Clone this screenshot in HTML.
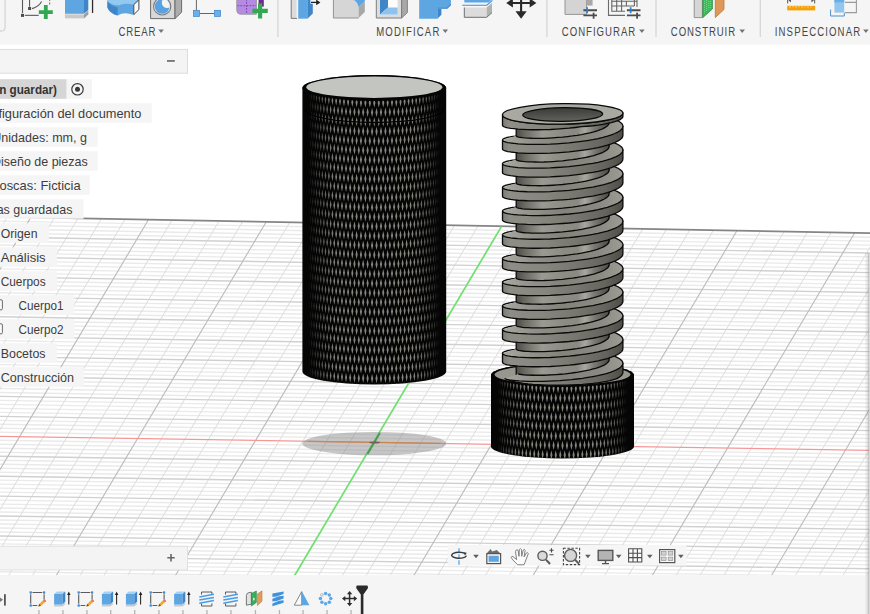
<!DOCTYPE html>
<html><head><meta charset="utf-8"><title>Fusion</title>
<style>
html,body{margin:0;padding:0;background:#fff;}
body{width:870px;height:614px;overflow:hidden;font-family:"Liberation Sans",sans-serif;}
#app{position:relative;width:870px;height:614px;overflow:hidden;background:#fff;}
#scene{position:absolute;left:0;top:0;}
#ui{position:absolute;left:0;top:0;}
#ui text{font-family:"Liberation Sans",sans-serif;}

</style></head>
<body>
<div id="app">
<svg id="scene" width="870" height="614" viewBox="0 0 870 614">
<defs><path id="kcol" d="M0 -4.7 l1.1 4.7 l-1.1 4.7 l-1.1 -4.7 zM0 14.3 l1.1 4.7 l-1.1 4.7 l-1.1 -4.7 zM0 33.4 l1.1 4.7 l-1.1 4.7 l-1.1 -4.7 zM0 52.4 l1.1 4.7 l-1.1 4.7 l-1.1 -4.7 zM0 71.3 l1.1 4.7 l-1.1 4.7 l-1.1 -4.7 zM0 90.3 l1.1 4.7 l-1.1 4.7 l-1.1 -4.7 zM0 109.3 l1.1 4.7 l-1.1 4.7 l-1.1 -4.7 zM0 128.3 l1.1 4.7 l-1.1 4.7 l-1.1 -4.7 zM0 147.3 l1.1 4.7 l-1.1 4.7 l-1.1 -4.7 zM0 166.3 l1.1 4.7 l-1.1 4.7 l-1.1 -4.7 zM0 185.3 l1.1 4.7 l-1.1 4.7 l-1.1 -4.7 zM0 204.3 l1.1 4.7 l-1.1 4.7 l-1.1 -4.7 zM0 223.3 l1.1 4.7 l-1.1 4.7 l-1.1 -4.7 zM0 242.3 l1.1 4.7 l-1.1 4.7 l-1.1 -4.7 zM0 261.4 l1.1 4.7 l-1.1 4.7 l-1.1 -4.7 zM0 280.4 l1.1 4.7 l-1.1 4.7 l-1.1 -4.7 zM0 299.4 l1.1 4.7 l-1.1 4.7 l-1.1 -4.7 zM0 318.4 l1.1 4.7 l-1.1 4.7 l-1.1 -4.7 z" fill="#86867e"/><linearGradient id="holeg" x1="0" y1="0" x2="0" y2="1"><stop offset="0" stop-color="#3a3a38"/><stop offset="1" stop-color="#62625e"/></linearGradient><linearGradient id="bandg" gradientUnits="userSpaceOnUse" x1="502.5" y1="0" x2="622.9" y2="0"><stop offset="0" stop-color="#7c7c74"/><stop offset="0.06" stop-color="#8e8e86"/><stop offset="0.35" stop-color="#86867e"/><stop offset="0.62" stop-color="#76766e"/><stop offset="0.85" stop-color="#65655e"/><stop offset="1" stop-color="#4e4e48"/></linearGradient><linearGradient id="coreg" gradientUnits="userSpaceOnUse" x1="516.2" y1="0" x2="609.2" y2="0"><stop offset="0" stop-color="#4c4c47"/><stop offset="0.10" stop-color="#6c6c65"/><stop offset="0.28" stop-color="#9a9a92"/><stop offset="0.5" stop-color="#8c8c84"/><stop offset="0.66" stop-color="#8a8a82"/><stop offset="0.74" stop-color="#a8a8a0"/><stop offset="0.84" stop-color="#7a7a73"/><stop offset="1" stop-color="#4a4a45"/></linearGradient><linearGradient id="topg" gradientUnits="userSpaceOnUse" x1="502.5" y1="0" x2="622.9" y2="0"><stop offset="0" stop-color="#aaaaa2"/><stop offset="0.22" stop-color="#93938b"/><stop offset="0.5" stop-color="#83837b"/><stop offset="0.8" stop-color="#8a8a82"/><stop offset="1" stop-color="#9c9c94"/></linearGradient></defs>
<g id="grid">
<path d="M0 221.1 L870 237.2M0 225 L870 241.1M0 229 L870 245.1M0 233 L870 249M0 241 L870 256.9M0 245 L870 260.9M0 249 L870 264.8M0 252.9 L870 268.8M0 260.9 L870 276.7M0 264.9 L870 280.6M0 268.9 L870 284.6M0 272.9 L870 288.5M0 280.8 L870 296.4M0 284.8 L870 300.4M0 288.8 L870 304.3M0 292.8 L870 308.3M0 300.8 L870 316.2M0 304.8 L870 320.1M0 308.7 L870 324.1M0 312.7 L870 328M0 320.7 L870 335.9M0 324.7 L870 339.8M0 328.7 L870 343.8M0 332.7 L870 347.7M0 340.6 L870 355.6M0 344.6 L870 359.6M0 348.6 L870 363.5M0 352.6 L870 367.5M0 360.6 L870 375.4M0 364.6 L870 379.3M0 368.5 L870 383.3M0 372.5 L870 387.2M0 380.5 L870 395.1M0 384.5 L870 399.1M0 388.5 L870 403M0 392.5 L870 407M0 400.4 L870 414.9M0 404.4 L870 418.8M0 408.4 L870 422.8M0 412.4 L870 426.7M0 420.4 L870 434.6M0 424.3 L870 438.5M0 428.3 L870 442.5M0 432.3 L870 446.4M0 440.3 L870 454.3M0 444.3 L870 458.3M0 448.3 L870 462.2M0 452.2 L870 466.2M0 460.2 L870 474.1M0 464.2 L870 478M0 468.2 L870 482M0 472.2 L870 485.9M0 480.1 L870 493.8M0 484.1 L870 497.8M0 488.1 L870 501.7M0 492.1 L870 505.7M0 500.1 L870 513.6M0 504.1 L870 517.5M0 508 L870 521.5M0 512 L870 525.4M0 520 L870 533.3M0 524 L870 537.3M0 528 L870 541.2M0 532 L870 545.1M0 539.9 L870 553M0 543.9 L870 557M0 547.9 L870 560.9M0 551.9 L870 564.9M0 559.9 L870 572.8M0 563.9 L870 576.7M0 567.8 L870 580.7M0 571.8 L870 584.6M0 579.8 L870 592.5M0 583.8 L870 596.5M0 587.8 L870 600.4" stroke="#eaeaea" stroke-width="1.4" fill="none"/>
<path d="M7.2 217.2 L-209.8 582M54.2 218.1 L-162.2 582M77.8 218.5 L-138.3 582M101.3 219 L-114.5 582M124.9 219.4 L-90.6 582M171.9 220.3 L-43 582M195.5 220.7 L-19.1 582M219 221.1 L4.7 582M242.6 221.6 L28.6 582M289.6 222.5 L76.3 582M313.2 222.9 L100.1 582M336.7 223.3 L123.9 582M360.3 223.8 L147.8 582M407.3 224.6 L195.5 582M430.9 225.1 L219.3 582M454.4 225.5 L243.1 582M478 226 L267 582M525 226.8 L314.7 582M548.6 227.3 L338.5 582M572.1 227.7 L362.3 582M595.7 228.1 L386.2 582M642.7 229 L433.9 582M666.3 229.5 L457.7 582M689.8 229.9 L481.5 582M713.4 230.3 L505.4 582M760.4 231.2 L553.1 582M784 231.7 L576.9 582M807.5 232.1 L600.8 582M831.1 232.5 L624.6 582M878.1 233.4 L672.3 582M901.7 233.8 L696.1 582M925.2 234.3 L720 582M948.8 234.7 L743.8 582M995.8 235.6 L791.5 582M1019.4 236 L815.3 582M1042.9 236.5 L839.2 582M1066.5 236.9 L863 582" stroke="#dcdcdc" stroke-width="1" fill="none"/>
<path d="M0 237 L870 253M0 256.9 L870 272.7M0 276.9 L870 292.5M0 296.8 L870 312.2M0 316.7 L870 332M0 336.6 L870 351.7M0 356.6 L870 371.4M0 376.5 L870 391.2M0 396.4 L870 410.9M0 416.4 L870 430.7M0 456.2 L870 470.1M0 476.2 L870 489.9M0 496.1 L870 509.6M0 516 L870 529.4M0 536 L870 549.1M0 555.9 L870 568.8M0 575.8 L870 588.6" stroke="#d0d0d0" stroke-width="1.35" fill="none"/>
<path d="M30.7 217.6 L-186 582M148.4 219.8 L-66.8 582M266.1 222 L52.4 582M383.8 224.2 L171.6 582M619.2 228.6 L410 582M736.9 230.8 L529.2 582M854.6 233 L648.4 582M972.3 235.2 L767.6 582" stroke="#bbbbbb" stroke-width="1.1" fill="none"/>
<path d="M0 216.9 L870 233.1" stroke="#858585" stroke-width="1.6" fill="none"/>
<path d="M0 436.3 L870 450.4" stroke="#f59797" stroke-width="1.3" fill="none"/>
<path d="M501.5 226.4 L290.8 582" stroke="#6fe06f" stroke-width="1.7" fill="none"/>
</g>
<ellipse cx="374.3" cy="443.6" rx="71.9" ry="11.7" fill="#868686" fill-opacity="0.47"/>
<path d="M308 441.3 L441 443.4" stroke="#cc8650" stroke-width="1.2" fill="none"/>
<path d="M379.9 433 L367.5 454" stroke="#3f9e4a" stroke-width="1.7" fill="none"/>
<ellipse cx="374.6" cy="442.5" rx="5.4" ry="1.1" fill="#7c5c56"/>
<g id="cyl1">
<clipPath id="clipc1"><path d="M302.4 88 L302.4 371.6 A71.9 12.9 0 0 0 446.2 371.6 L446.2 88 A71.9 12.9 0 0 0 302.4 88 Z"/></clipPath>
<path d="M302.4 88 L302.4 371.6 A71.9 12.9 0 0 0 446.2 371.6 L446.2 88 A71.9 12.9 0 0 0 302.4 88 Z" fill="#050505"/>
<g clip-path="url(#clipc1)">
<use href="#kcol" transform="translate(309.61 76.6) scale(0.44 1)" opacity="0.08"/>
<use href="#kcol" transform="translate(310.62 86.5) scale(0.46 1)" opacity="0.14"/>
<use href="#kcol" transform="translate(311.69 77.3) scale(0.49 1)" opacity="0.2"/>
<use href="#kcol" transform="translate(312.82 87.2) scale(0.52 1)" opacity="0.26"/>
<use href="#kcol" transform="translate(314 78) scale(0.54 1)" opacity="0.32"/>
<use href="#kcol" transform="translate(315.25 87.9) scale(0.57 1)" opacity="0.38"/>
<use href="#kcol" transform="translate(316.55 78.7) scale(0.6 1)" opacity="0.44"/>
<use href="#kcol" transform="translate(317.91 88.5) scale(0.62 1)" opacity="0.49"/>
<use href="#kcol" transform="translate(319.33 79.3) scale(0.64 1)" opacity="0.54"/>
<use href="#kcol" transform="translate(320.79 89.1) scale(0.67 1)" opacity="0.6"/>
<use href="#kcol" transform="translate(322.31 79.9) scale(0.69 1)" opacity="0.65"/>
<use href="#kcol" transform="translate(323.88 89.7) scale(0.71 1)" opacity="0.7"/>
<use href="#kcol" transform="translate(325.5 80.5) scale(0.73 1)" opacity="0.74"/>
<use href="#kcol" transform="translate(327.16 90.2) scale(0.76 1)" opacity="0.79"/>
<use href="#kcol" transform="translate(328.87 81) scale(0.78 1)" opacity="0.83"/>
<use href="#kcol" transform="translate(330.63 90.7) scale(0.79 1)" opacity="0.88"/>
<use href="#kcol" transform="translate(332.42 81.5) scale(0.81 1)" opacity="0.92"/>
<use href="#kcol" transform="translate(334.26 91.2) scale(0.83 1)" opacity="0.96"/>
<use href="#kcol" transform="translate(336.14 81.9) scale(0.85 1)" opacity="0.99"/>
<use href="#kcol" transform="translate(338.05 91.6) scale(0.86 1)"/>
<use href="#kcol" transform="translate(340 82.3) scale(0.88 1)"/>
<use href="#kcol" transform="translate(341.98 92) scale(0.89 1)"/>
<use href="#kcol" transform="translate(343.99 82.7) scale(0.91 1)"/>
<use href="#kcol" transform="translate(346.03 92.4) scale(0.92 1)"/>
<use href="#kcol" transform="translate(348.1 83) scale(0.93 1)"/>
<use href="#kcol" transform="translate(350.19 92.7) scale(0.94 1)"/>
<use href="#kcol" transform="translate(352.31 83.3) scale(0.95 1)"/>
<use href="#kcol" transform="translate(354.45 92.9) scale(0.96 1)"/>
<use href="#kcol" transform="translate(356.6 83.5) scale(0.97 1)"/>
<use href="#kcol" transform="translate(358.78 93.1) scale(0.98 1)"/>
<use href="#kcol" transform="translate(360.97 83.7) scale(0.98 1)"/>
<use href="#kcol" transform="translate(363.17 93.2) scale(0.99 1)"/>
<use href="#kcol" transform="translate(365.38 83.8) scale(0.99 1)"/>
<use href="#kcol" transform="translate(367.6 93.3) scale(1 1)"/>
<use href="#kcol" transform="translate(369.83 83.9) scale(1 1)"/>
<use href="#kcol" transform="translate(372.07 93.4) scale(1 1)"/>
<use href="#kcol" transform="translate(374.3 83.9) scale(1 1)"/>
<use href="#kcol" transform="translate(376.53 93.4) scale(1 1)"/>
<use href="#kcol" transform="translate(378.77 83.9) scale(1 1)"/>
<use href="#kcol" transform="translate(381 93.3) scale(1 1)"/>
<use href="#kcol" transform="translate(383.22 83.8) scale(0.99 1)"/>
<use href="#kcol" transform="translate(385.43 93.2) scale(0.99 1)"/>
<use href="#kcol" transform="translate(387.63 83.7) scale(0.98 1)"/>
<use href="#kcol" transform="translate(389.82 93.1) scale(0.98 1)"/>
<use href="#kcol" transform="translate(392 83.5) scale(0.97 1)"/>
<use href="#kcol" transform="translate(394.15 92.9) scale(0.96 1)"/>
<use href="#kcol" transform="translate(396.29 83.3) scale(0.95 1)"/>
<use href="#kcol" transform="translate(398.41 92.7) scale(0.94 1)"/>
<use href="#kcol" transform="translate(400.5 83) scale(0.93 1)"/>
<use href="#kcol" transform="translate(402.57 92.4) scale(0.92 1)"/>
<use href="#kcol" transform="translate(404.61 82.7) scale(0.91 1)"/>
<use href="#kcol" transform="translate(406.62 92) scale(0.89 1)"/>
<use href="#kcol" transform="translate(408.6 82.3) scale(0.88 1)"/>
<use href="#kcol" transform="translate(410.55 91.6) scale(0.86 1)"/>
<use href="#kcol" transform="translate(412.46 81.9) scale(0.85 1)" opacity="0.99"/>
<use href="#kcol" transform="translate(414.34 91.2) scale(0.83 1)" opacity="0.96"/>
<use href="#kcol" transform="translate(416.18 81.5) scale(0.81 1)" opacity="0.92"/>
<use href="#kcol" transform="translate(417.97 90.7) scale(0.79 1)" opacity="0.88"/>
<use href="#kcol" transform="translate(419.73 81) scale(0.78 1)" opacity="0.83"/>
<use href="#kcol" transform="translate(421.44 90.2) scale(0.76 1)" opacity="0.79"/>
<use href="#kcol" transform="translate(423.1 80.5) scale(0.73 1)" opacity="0.74"/>
<use href="#kcol" transform="translate(424.72 89.7) scale(0.71 1)" opacity="0.7"/>
<use href="#kcol" transform="translate(426.29 79.9) scale(0.69 1)" opacity="0.65"/>
<use href="#kcol" transform="translate(427.81 89.1) scale(0.67 1)" opacity="0.6"/>
<use href="#kcol" transform="translate(429.27 79.3) scale(0.64 1)" opacity="0.54"/>
<use href="#kcol" transform="translate(430.69 88.5) scale(0.62 1)" opacity="0.49"/>
<use href="#kcol" transform="translate(432.05 78.7) scale(0.6 1)" opacity="0.44"/>
<use href="#kcol" transform="translate(433.35 87.9) scale(0.57 1)" opacity="0.38"/>
<use href="#kcol" transform="translate(434.6 78) scale(0.54 1)" opacity="0.32"/>
<use href="#kcol" transform="translate(435.78 87.2) scale(0.52 1)" opacity="0.26"/>
<use href="#kcol" transform="translate(436.91 77.3) scale(0.49 1)" opacity="0.2"/>
<use href="#kcol" transform="translate(437.98 86.5) scale(0.46 1)" opacity="0.14"/>
<use href="#kcol" transform="translate(438.99 76.6) scale(0.44 1)" opacity="0.08"/>
</g>
<path d="M305.4 109.6 A68.9 12.9 0 0 0 443.2 109.6" stroke="#000" stroke-width="1.3" fill="none"/>
<ellipse cx="374.3" cy="88" rx="71.9" ry="12.9" fill="#050505"/>
<ellipse cx="374.3" cy="87.2" rx="68" ry="10.7" fill="#c3c5c1"/>
</g>
<g id="screw">
<clipPath id="clipc2"><path d="M491 375 L491 446.5 A71.5 12 0 0 0 634 446.5 L634 375 A71.5 12 0 0 0 491 375 Z"/></clipPath>
<path d="M491 375 L491 446.5 A71.5 12 0 0 0 634 446.5 L634 375 A71.5 12 0 0 0 491 375 Z" fill="#050505"/>
<g clip-path="url(#clipc2)">
<use href="#kcol" transform="translate(497.98 362.7) scale(0.43 1)" opacity="0.07"/>
<use href="#kcol" transform="translate(498.97 372.5) scale(0.46 1)" opacity="0.13"/>
<use href="#kcol" transform="translate(500.03 363.3) scale(0.49 1)" opacity="0.19"/>
<use href="#kcol" transform="translate(501.15 373.2) scale(0.51 1)" opacity="0.25"/>
<use href="#kcol" transform="translate(502.32 364) scale(0.54 1)" opacity="0.31"/>
<use href="#kcol" transform="translate(503.56 373.8) scale(0.57 1)" opacity="0.37"/>
<use href="#kcol" transform="translate(504.85 364.6) scale(0.59 1)" opacity="0.43"/>
<use href="#kcol" transform="translate(506.2 374.4) scale(0.62 1)" opacity="0.48"/>
<use href="#kcol" transform="translate(507.61 365.2) scale(0.64 1)" opacity="0.54"/>
<use href="#kcol" transform="translate(509.07 375) scale(0.66 1)" opacity="0.59"/>
<use href="#kcol" transform="translate(510.58 365.8) scale(0.69 1)" opacity="0.64"/>
<use href="#kcol" transform="translate(512.14 375.5) scale(0.71 1)" opacity="0.69"/>
<use href="#kcol" transform="translate(513.75 366.3) scale(0.73 1)" opacity="0.74"/>
<use href="#kcol" transform="translate(515.41 376) scale(0.75 1)" opacity="0.78"/>
<use href="#kcol" transform="translate(517.11 366.8) scale(0.77 1)" opacity="0.83"/>
<use href="#kcol" transform="translate(518.86 376.5) scale(0.79 1)" opacity="0.87"/>
<use href="#kcol" transform="translate(520.66 367.2) scale(0.81 1)" opacity="0.91"/>
<use href="#kcol" transform="translate(522.49 376.9) scale(0.83 1)" opacity="0.95"/>
<use href="#kcol" transform="translate(524.36 367.7) scale(0.85 1)" opacity="0.99"/>
<use href="#kcol" transform="translate(526.27 377.3) scale(0.86 1)"/>
<use href="#kcol" transform="translate(528.21 368) scale(0.88 1)"/>
<use href="#kcol" transform="translate(530.19 377.7) scale(0.89 1)"/>
<use href="#kcol" transform="translate(532.2 368.4) scale(0.91 1)"/>
<use href="#kcol" transform="translate(534.24 378) scale(0.92 1)"/>
<use href="#kcol" transform="translate(536.3 368.7) scale(0.93 1)"/>
<use href="#kcol" transform="translate(538.4 378.3) scale(0.94 1)"/>
<use href="#kcol" transform="translate(540.51 368.9) scale(0.95 1)"/>
<use href="#kcol" transform="translate(542.65 378.5) scale(0.96 1)"/>
<use href="#kcol" transform="translate(544.81 369.1) scale(0.97 1)"/>
<use href="#kcol" transform="translate(546.98 378.7) scale(0.98 1)"/>
<use href="#kcol" transform="translate(549.17 369.3) scale(0.98 1)"/>
<use href="#kcol" transform="translate(551.37 378.9) scale(0.99 1)"/>
<use href="#kcol" transform="translate(553.58 369.4) scale(0.99 1)"/>
<use href="#kcol" transform="translate(555.8 378.9) scale(1 1)"/>
<use href="#kcol" transform="translate(558.03 369.5) scale(1 1)"/>
<use href="#kcol" transform="translate(560.27 379) scale(1 1)"/>
<use href="#kcol" transform="translate(562.5 369.5) scale(1 1)"/>
<use href="#kcol" transform="translate(564.73 379) scale(1 1)"/>
<use href="#kcol" transform="translate(566.97 369.5) scale(1 1)"/>
<use href="#kcol" transform="translate(569.2 378.9) scale(1 1)"/>
<use href="#kcol" transform="translate(571.42 369.4) scale(0.99 1)"/>
<use href="#kcol" transform="translate(573.63 378.9) scale(0.99 1)"/>
<use href="#kcol" transform="translate(575.83 369.3) scale(0.98 1)"/>
<use href="#kcol" transform="translate(578.02 378.7) scale(0.98 1)"/>
<use href="#kcol" transform="translate(580.19 369.1) scale(0.97 1)"/>
<use href="#kcol" transform="translate(582.35 378.5) scale(0.96 1)"/>
<use href="#kcol" transform="translate(584.49 368.9) scale(0.95 1)"/>
<use href="#kcol" transform="translate(586.6 378.3) scale(0.94 1)"/>
<use href="#kcol" transform="translate(588.7 368.7) scale(0.93 1)"/>
<use href="#kcol" transform="translate(590.76 378) scale(0.92 1)"/>
<use href="#kcol" transform="translate(592.8 368.4) scale(0.91 1)"/>
<use href="#kcol" transform="translate(594.81 377.7) scale(0.89 1)"/>
<use href="#kcol" transform="translate(596.79 368) scale(0.88 1)"/>
<use href="#kcol" transform="translate(598.73 377.3) scale(0.86 1)"/>
<use href="#kcol" transform="translate(600.64 367.7) scale(0.85 1)" opacity="0.99"/>
<use href="#kcol" transform="translate(602.51 376.9) scale(0.83 1)" opacity="0.95"/>
<use href="#kcol" transform="translate(604.34 367.2) scale(0.81 1)" opacity="0.91"/>
<use href="#kcol" transform="translate(606.14 376.5) scale(0.79 1)" opacity="0.87"/>
<use href="#kcol" transform="translate(607.89 366.8) scale(0.77 1)" opacity="0.83"/>
<use href="#kcol" transform="translate(609.59 376) scale(0.75 1)" opacity="0.78"/>
<use href="#kcol" transform="translate(611.25 366.3) scale(0.73 1)" opacity="0.74"/>
<use href="#kcol" transform="translate(612.86 375.5) scale(0.71 1)" opacity="0.69"/>
<use href="#kcol" transform="translate(614.42 365.8) scale(0.69 1)" opacity="0.64"/>
<use href="#kcol" transform="translate(615.93 375) scale(0.66 1)" opacity="0.59"/>
<use href="#kcol" transform="translate(617.39 365.2) scale(0.64 1)" opacity="0.54"/>
<use href="#kcol" transform="translate(618.8 374.4) scale(0.62 1)" opacity="0.48"/>
<use href="#kcol" transform="translate(620.15 364.6) scale(0.59 1)" opacity="0.43"/>
<use href="#kcol" transform="translate(621.44 373.8) scale(0.57 1)" opacity="0.37"/>
<use href="#kcol" transform="translate(622.68 364) scale(0.54 1)" opacity="0.31"/>
<use href="#kcol" transform="translate(623.85 373.2) scale(0.51 1)" opacity="0.25"/>
<use href="#kcol" transform="translate(624.97 363.3) scale(0.49 1)" opacity="0.19"/>
<use href="#kcol" transform="translate(626.03 372.5) scale(0.46 1)" opacity="0.13"/>
<use href="#kcol" transform="translate(627.02 362.7) scale(0.43 1)" opacity="0.07"/>
</g>
<ellipse cx="562.5" cy="375" rx="71.5" ry="12" fill="#050505"/>
<ellipse cx="562.5" cy="374.6" rx="67.9" ry="10.1" fill="#97978f"/>
<g transform="matrix(1 -0.015 0 1 0 8.44)">
<path d="M502.5 115.4L502.6 115.1L502.8 114.7L503.2 114.4L503.7 114.1L504.4 113.8L505.2 113.5L506.2 113.2L507.3 112.9L508.5 112.6L509.9 112.4L511.4 112.1L513 111.9L514.8 111.7L516.7 111.4L518.7 111.3L528.7 108.8L527.1 108.9L525.7 109.1L524.3 109.4L523.1 109.8L521.9 110.1L520.8 110.5L519.9 110.8L519 111.2L518.3 111.6L517.7 111.9L517.1 112.3L516.7 112.7L516.4 113.1L516.3 113.5L516.2 113.9Z" fill="url(#topg)"/>
<path d="M502.5 115.4L502.6 115.1L502.8 114.7L503.2 114.4L503.7 114.1L504.4 113.8L505.2 113.5L506.2 113.2L507.3 112.9L508.5 112.6L509.9 112.4L511.4 112.1L513 111.9L514.8 111.7L516.7 111.4L518.7 111.3" fill="none" stroke="#0a0a0a" stroke-width="1.3" stroke-linejoin="round"/>
<path d="M606.7 117.4L608.9 118.1L610.9 118.7L612.8 119.4L614.5 120L616.1 120.7L617.5 121.4L618.8 122.1L619.9 122.9L620.8 123.6L621.6 124.3L622.2 125.1L622.6 125.8L622.8 126.6L622.9 127.3L622.8 128.1L609.1 124L609.2 123.3L609.1 122.7L609 122.1L608.6 121.4L608.2 120.8L607.6 120.2L606.9 119.6L606 119L605 118.4L603.9 117.8L602.7 117.2L601.4 116.6L599.9 116.1L598.4 115.6L596.7 115Z" fill="url(#topg)"/>
<path d="M606.7 117.4L608.9 118.1L610.9 118.7L612.8 119.4L614.5 120L616.1 120.7L617.5 121.4L618.8 122.1L619.9 122.9L620.8 123.6L621.6 124.3L622.2 125.1L622.6 125.8L622.8 126.6L622.9 127.3L622.8 128.1" fill="none" stroke="#0a0a0a" stroke-width="1.3" stroke-linejoin="round"/>
<path d="M502.5 139.1L502.6 138.8L502.8 138.4L503.2 138.1L503.7 137.8L504.4 137.5L505.2 137.2L506.2 136.9L507.3 136.6L508.5 136.3L509.9 136.1L511.4 135.8L513 135.6L514.8 135.4L516.7 135.1L518.7 135L528.7 132.5L527.1 132.6L525.7 132.8L524.3 132.9L523.1 133L521.9 133.2L520.8 133.4L519.9 133.5L519 133.7L518.3 133.9L517.7 134.1L517.1 134.3L516.7 134.5L516.4 134.7L516.3 134.9L516.2 135.1Z" fill="url(#topg)"/>
<path d="M502.5 139.1L502.6 138.8L502.8 138.4L503.2 138.1L503.7 137.8L504.4 137.5L505.2 137.2L506.2 136.9L507.3 136.6L508.5 136.3L509.9 136.1L511.4 135.8L513 135.6L514.8 135.4L516.7 135.1L518.7 135" fill="none" stroke="#0a0a0a" stroke-width="1.3" stroke-linejoin="round"/>
<path d="M606.7 141.1L608.9 141.8L610.9 142.4L612.8 143.1L614.5 143.7L616.1 144.4L617.5 145.1L618.8 145.8L619.9 146.6L620.8 147.3L621.6 148L622.2 148.8L622.6 149.5L622.8 150.3L622.9 151L622.8 151.8L609.1 147.7L609.2 147L609.1 146.4L609 145.8L608.6 145.1L608.2 144.5L607.6 143.9L606.9 143.3L606 142.7L605 142.1L603.9 141.5L602.7 140.9L601.4 140.3L599.9 139.8L598.4 139.3L596.7 138.7Z" fill="url(#topg)"/>
<path d="M606.7 141.1L608.9 141.8L610.9 142.4L612.8 143.1L614.5 143.7L616.1 144.4L617.5 145.1L618.8 145.8L619.9 146.6L620.8 147.3L621.6 148L622.2 148.8L622.6 149.5L622.8 150.3L622.9 151L622.8 151.8" fill="none" stroke="#0a0a0a" stroke-width="1.3" stroke-linejoin="round"/>
<path d="M502.5 162.8L502.6 162.5L502.8 162.1L503.2 161.8L503.7 161.5L504.4 161.2L505.2 160.9L506.2 160.6L507.3 160.3L508.5 160L509.9 159.8L511.4 159.5L513 159.3L514.8 159.1L516.7 158.8L518.7 158.7L528.7 156.2L527.1 156.3L525.7 156.5L524.3 156.6L523.1 156.7L521.9 156.9L520.8 157.1L519.9 157.2L519 157.4L518.3 157.6L517.7 157.8L517.1 158L516.7 158.2L516.4 158.4L516.3 158.6L516.2 158.8Z" fill="url(#topg)"/>
<path d="M502.5 162.8L502.6 162.5L502.8 162.1L503.2 161.8L503.7 161.5L504.4 161.2L505.2 160.9L506.2 160.6L507.3 160.3L508.5 160L509.9 159.8L511.4 159.5L513 159.3L514.8 159.1L516.7 158.8L518.7 158.7" fill="none" stroke="#0a0a0a" stroke-width="1.3" stroke-linejoin="round"/>
<path d="M606.7 164.8L608.9 165.5L610.9 166.1L612.8 166.8L614.5 167.4L616.1 168.1L617.5 168.8L618.8 169.5L619.9 170.3L620.8 171L621.6 171.7L622.2 172.5L622.6 173.2L622.8 174L622.9 174.7L622.8 175.5L609.1 171.4L609.2 170.7L609.1 170.1L609 169.5L608.6 168.8L608.2 168.2L607.6 167.6L606.9 167L606 166.4L605 165.8L603.9 165.2L602.7 164.6L601.4 164L599.9 163.5L598.4 163L596.7 162.4Z" fill="url(#topg)"/>
<path d="M606.7 164.8L608.9 165.5L610.9 166.1L612.8 166.8L614.5 167.4L616.1 168.1L617.5 168.8L618.8 169.5L619.9 170.3L620.8 171L621.6 171.7L622.2 172.5L622.6 173.2L622.8 174L622.9 174.7L622.8 175.5" fill="none" stroke="#0a0a0a" stroke-width="1.3" stroke-linejoin="round"/>
<path d="M502.5 186.5L502.6 186.2L502.8 185.8L503.2 185.5L503.7 185.2L504.4 184.9L505.2 184.6L506.2 184.3L507.3 184L508.5 183.7L509.9 183.5L511.4 183.2L513 183L514.8 182.8L516.7 182.5L518.7 182.4L528.7 179.9L527.1 180L525.7 180.2L524.3 180.3L523.1 180.4L521.9 180.6L520.8 180.8L519.9 180.9L519 181.1L518.3 181.3L517.7 181.5L517.1 181.7L516.7 181.9L516.4 182.1L516.3 182.3L516.2 182.5Z" fill="url(#topg)"/>
<path d="M502.5 186.5L502.6 186.2L502.8 185.8L503.2 185.5L503.7 185.2L504.4 184.9L505.2 184.6L506.2 184.3L507.3 184L508.5 183.7L509.9 183.5L511.4 183.2L513 183L514.8 182.8L516.7 182.5L518.7 182.4" fill="none" stroke="#0a0a0a" stroke-width="1.3" stroke-linejoin="round"/>
<path d="M606.7 188.5L608.9 189.2L610.9 189.8L612.8 190.5L614.5 191.1L616.1 191.8L617.5 192.5L618.8 193.2L619.9 194L620.8 194.7L621.6 195.4L622.2 196.2L622.6 196.9L622.8 197.7L622.9 198.4L622.8 199.2L609.1 195.1L609.2 194.4L609.1 193.8L609 193.2L608.6 192.5L608.2 191.9L607.6 191.3L606.9 190.7L606 190.1L605 189.5L603.9 188.9L602.7 188.3L601.4 187.7L599.9 187.2L598.4 186.7L596.7 186.1Z" fill="url(#topg)"/>
<path d="M606.7 188.5L608.9 189.2L610.9 189.8L612.8 190.5L614.5 191.1L616.1 191.8L617.5 192.5L618.8 193.2L619.9 194L620.8 194.7L621.6 195.4L622.2 196.2L622.6 196.9L622.8 197.7L622.9 198.4L622.8 199.2" fill="none" stroke="#0a0a0a" stroke-width="1.3" stroke-linejoin="round"/>
<path d="M502.5 210.2L502.6 209.9L502.8 209.5L503.2 209.2L503.7 208.9L504.4 208.6L505.2 208.3L506.2 208L507.3 207.7L508.5 207.4L509.9 207.2L511.4 206.9L513 206.7L514.8 206.5L516.7 206.2L518.7 206.1L528.7 203.6L527.1 203.7L525.7 203.9L524.3 204L523.1 204.1L521.9 204.3L520.8 204.5L519.9 204.6L519 204.8L518.3 205L517.7 205.2L517.1 205.4L516.7 205.6L516.4 205.8L516.3 206L516.2 206.2Z" fill="url(#topg)"/>
<path d="M502.5 210.2L502.6 209.9L502.8 209.5L503.2 209.2L503.7 208.9L504.4 208.6L505.2 208.3L506.2 208L507.3 207.7L508.5 207.4L509.9 207.2L511.4 206.9L513 206.7L514.8 206.5L516.7 206.2L518.7 206.1" fill="none" stroke="#0a0a0a" stroke-width="1.3" stroke-linejoin="round"/>
<path d="M606.7 212.2L608.9 212.9L610.9 213.5L612.8 214.2L614.5 214.8L616.1 215.5L617.5 216.2L618.8 216.9L619.9 217.7L620.8 218.4L621.6 219.1L622.2 219.9L622.6 220.6L622.8 221.4L622.9 222.1L622.8 222.9L609.1 218.8L609.2 218.1L609.1 217.5L609 216.9L608.6 216.2L608.2 215.6L607.6 215L606.9 214.4L606 213.8L605 213.2L603.9 212.6L602.7 212L601.4 211.4L599.9 210.9L598.4 210.4L596.7 209.8Z" fill="url(#topg)"/>
<path d="M606.7 212.2L608.9 212.9L610.9 213.5L612.8 214.2L614.5 214.8L616.1 215.5L617.5 216.2L618.8 216.9L619.9 217.7L620.8 218.4L621.6 219.1L622.2 219.9L622.6 220.6L622.8 221.4L622.9 222.1L622.8 222.9" fill="none" stroke="#0a0a0a" stroke-width="1.3" stroke-linejoin="round"/>
<path d="M502.5 233.9L502.6 233.6L502.8 233.2L503.2 232.9L503.7 232.6L504.4 232.3L505.2 232L506.2 231.7L507.3 231.4L508.5 231.1L509.9 230.9L511.4 230.6L513 230.4L514.8 230.2L516.7 229.9L518.7 229.8L528.7 227.3L527.1 227.4L525.7 227.6L524.3 227.7L523.1 227.8L521.9 228L520.8 228.2L519.9 228.3L519 228.5L518.3 228.7L517.7 228.9L517.1 229.1L516.7 229.3L516.4 229.5L516.3 229.7L516.2 229.9Z" fill="url(#topg)"/>
<path d="M502.5 233.9L502.6 233.6L502.8 233.2L503.2 232.9L503.7 232.6L504.4 232.3L505.2 232L506.2 231.7L507.3 231.4L508.5 231.1L509.9 230.9L511.4 230.6L513 230.4L514.8 230.2L516.7 229.9L518.7 229.8" fill="none" stroke="#0a0a0a" stroke-width="1.3" stroke-linejoin="round"/>
<path d="M606.7 235.9L608.9 236.6L610.9 237.2L612.8 237.9L614.5 238.5L616.1 239.2L617.5 239.9L618.8 240.6L619.9 241.4L620.8 242.1L621.6 242.8L622.2 243.6L622.6 244.3L622.8 245.1L622.9 245.8L622.8 246.6L609.1 242.5L609.2 241.8L609.1 241.2L609 240.6L608.6 239.9L608.2 239.3L607.6 238.7L606.9 238.1L606 237.5L605 236.9L603.9 236.3L602.7 235.7L601.4 235.1L599.9 234.6L598.4 234.1L596.7 233.5Z" fill="url(#topg)"/>
<path d="M606.7 235.9L608.9 236.6L610.9 237.2L612.8 237.9L614.5 238.5L616.1 239.2L617.5 239.9L618.8 240.6L619.9 241.4L620.8 242.1L621.6 242.8L622.2 243.6L622.6 244.3L622.8 245.1L622.9 245.8L622.8 246.6" fill="none" stroke="#0a0a0a" stroke-width="1.3" stroke-linejoin="round"/>
<path d="M502.5 257.6L502.6 257.3L502.8 256.9L503.2 256.6L503.7 256.3L504.4 256L505.2 255.7L506.2 255.4L507.3 255.1L508.5 254.8L509.9 254.6L511.4 254.3L513 254.1L514.8 253.9L516.7 253.6L518.7 253.5L528.7 251L527.1 251.1L525.7 251.3L524.3 251.4L523.1 251.5L521.9 251.7L520.8 251.9L519.9 252L519 252.2L518.3 252.4L517.7 252.6L517.1 252.8L516.7 253L516.4 253.2L516.3 253.4L516.2 253.6Z" fill="url(#topg)"/>
<path d="M502.5 257.6L502.6 257.3L502.8 256.9L503.2 256.6L503.7 256.3L504.4 256L505.2 255.7L506.2 255.4L507.3 255.1L508.5 254.8L509.9 254.6L511.4 254.3L513 254.1L514.8 253.9L516.7 253.6L518.7 253.5" fill="none" stroke="#0a0a0a" stroke-width="1.3" stroke-linejoin="round"/>
<path d="M606.7 259.6L608.9 260.3L610.9 260.9L612.8 261.6L614.5 262.2L616.1 262.9L617.5 263.6L618.8 264.3L619.9 265.1L620.8 265.8L621.6 266.5L622.2 267.3L622.6 268L622.8 268.8L622.9 269.5L622.8 270.3L609.1 266.2L609.2 265.5L609.1 264.9L609 264.3L608.6 263.6L608.2 263L607.6 262.4L606.9 261.8L606 261.2L605 260.6L603.9 260L602.7 259.4L601.4 258.8L599.9 258.3L598.4 257.8L596.7 257.2Z" fill="url(#topg)"/>
<path d="M606.7 259.6L608.9 260.3L610.9 260.9L612.8 261.6L614.5 262.2L616.1 262.9L617.5 263.6L618.8 264.3L619.9 265.1L620.8 265.8L621.6 266.5L622.2 267.3L622.6 268L622.8 268.8L622.9 269.5L622.8 270.3" fill="none" stroke="#0a0a0a" stroke-width="1.3" stroke-linejoin="round"/>
<path d="M502.5 281.3L502.6 281L502.8 280.6L503.2 280.3L503.7 280L504.4 279.7L505.2 279.4L506.2 279.1L507.3 278.8L508.5 278.5L509.9 278.3L511.4 278L513 277.8L514.8 277.6L516.7 277.3L518.7 277.2L528.7 274.7L527.1 274.8L525.7 275L524.3 275.1L523.1 275.2L521.9 275.4L520.8 275.6L519.9 275.7L519 275.9L518.3 276.1L517.7 276.3L517.1 276.5L516.7 276.7L516.4 276.9L516.3 277.1L516.2 277.3Z" fill="url(#topg)"/>
<path d="M502.5 281.3L502.6 281L502.8 280.6L503.2 280.3L503.7 280L504.4 279.7L505.2 279.4L506.2 279.1L507.3 278.8L508.5 278.5L509.9 278.3L511.4 278L513 277.8L514.8 277.6L516.7 277.3L518.7 277.2" fill="none" stroke="#0a0a0a" stroke-width="1.3" stroke-linejoin="round"/>
<path d="M606.7 283.3L608.9 284L610.9 284.6L612.8 285.3L614.5 285.9L616.1 286.6L617.5 287.3L618.8 288L619.9 288.8L620.8 289.5L621.6 290.2L622.2 291L622.6 291.7L622.8 292.5L622.9 293.2L622.8 294L609.1 289.9L609.2 289.2L609.1 288.6L609 288L608.6 287.3L608.2 286.7L607.6 286.1L606.9 285.5L606 284.9L605 284.3L603.9 283.7L602.7 283.1L601.4 282.5L599.9 282L598.4 281.5L596.7 280.9Z" fill="url(#topg)"/>
<path d="M606.7 283.3L608.9 284L610.9 284.6L612.8 285.3L614.5 285.9L616.1 286.6L617.5 287.3L618.8 288L619.9 288.8L620.8 289.5L621.6 290.2L622.2 291L622.6 291.7L622.8 292.5L622.9 293.2L622.8 294" fill="none" stroke="#0a0a0a" stroke-width="1.3" stroke-linejoin="round"/>
<path d="M502.5 305L502.6 304.7L502.8 304.3L503.2 304L503.7 303.7L504.4 303.4L505.2 303.1L506.2 302.8L507.3 302.5L508.5 302.2L509.9 302L511.4 301.7L513 301.5L514.8 301.3L516.7 301L518.7 300.9L528.7 298.4L527.1 298.5L525.7 298.7L524.3 298.8L523.1 298.9L521.9 299.1L520.8 299.3L519.9 299.4L519 299.6L518.3 299.8L517.7 300L517.1 300.2L516.7 300.4L516.4 300.6L516.3 300.8L516.2 301Z" fill="url(#topg)"/>
<path d="M502.5 305L502.6 304.7L502.8 304.3L503.2 304L503.7 303.7L504.4 303.4L505.2 303.1L506.2 302.8L507.3 302.5L508.5 302.2L509.9 302L511.4 301.7L513 301.5L514.8 301.3L516.7 301L518.7 300.9" fill="none" stroke="#0a0a0a" stroke-width="1.3" stroke-linejoin="round"/>
<path d="M606.7 307L608.9 307.7L610.9 308.3L612.8 309L614.5 309.6L616.1 310.3L617.5 311L618.8 311.7L619.9 312.5L620.8 313.2L621.6 313.9L622.2 314.7L622.6 315.4L622.8 316.2L622.9 316.9L622.8 317.7L609.1 313.6L609.2 312.9L609.1 312.3L609 311.7L608.6 311L608.2 310.4L607.6 309.8L606.9 309.2L606 308.6L605 308L603.9 307.4L602.7 306.8L601.4 306.2L599.9 305.7L598.4 305.2L596.7 304.6Z" fill="url(#topg)"/>
<path d="M606.7 307L608.9 307.7L610.9 308.3L612.8 309L614.5 309.6L616.1 310.3L617.5 311L618.8 311.7L619.9 312.5L620.8 313.2L621.6 313.9L622.2 314.7L622.6 315.4L622.8 316.2L622.9 316.9L622.8 317.7" fill="none" stroke="#0a0a0a" stroke-width="1.3" stroke-linejoin="round"/>
<path d="M502.5 328.7L502.6 328.4L502.8 328L503.2 327.7L503.7 327.4L504.4 327.1L505.2 326.8L506.2 326.5L507.3 326.2L508.5 325.9L509.9 325.7L511.4 325.4L513 325.2L514.8 325L516.7 324.7L518.7 324.6L528.7 322.1L527.1 322.2L525.7 322.4L524.3 322.5L523.1 322.6L521.9 322.8L520.8 323L519.9 323.1L519 323.3L518.3 323.5L517.7 323.7L517.1 323.9L516.7 324.1L516.4 324.3L516.3 324.5L516.2 324.7Z" fill="url(#topg)"/>
<path d="M502.5 328.7L502.6 328.4L502.8 328L503.2 327.7L503.7 327.4L504.4 327.1L505.2 326.8L506.2 326.5L507.3 326.2L508.5 325.9L509.9 325.7L511.4 325.4L513 325.2L514.8 325L516.7 324.7L518.7 324.6" fill="none" stroke="#0a0a0a" stroke-width="1.3" stroke-linejoin="round"/>
<path d="M606.7 330.7L608.9 331.4L610.9 332L612.8 332.7L614.5 333.3L616.1 334L617.5 334.7L618.8 335.4L619.9 336.2L620.8 336.9L621.6 337.6L622.2 338.4L622.6 339.1L622.8 339.9L622.9 340.6L622.8 341.4L609.1 337.3L609.2 336.6L609.1 336L609 335.4L608.6 334.7L608.2 334.1L607.6 333.5L606.9 332.9L606 332.3L605 331.7L603.9 331.1L602.7 330.5L601.4 329.9L599.9 329.4L598.4 328.9L596.7 328.3Z" fill="url(#topg)"/>
<path d="M606.7 330.7L608.9 331.4L610.9 332L612.8 332.7L614.5 333.3L616.1 334L617.5 334.7L618.8 335.4L619.9 336.2L620.8 336.9L621.6 337.6L622.2 338.4L622.6 339.1L622.8 339.9L622.9 340.6L622.8 341.4" fill="none" stroke="#0a0a0a" stroke-width="1.3" stroke-linejoin="round"/>
<path d="M502.5 352.4L502.6 352.1L502.8 351.7L503.2 351.4L503.7 351.1L504.4 350.8L505.2 350.5L506.2 350.2L507.3 349.9L508.5 349.6L509.9 349.4L511.4 349.1L513 348.9L514.8 348.7L516.7 348.4L518.7 348.3L528.7 345.8L527.1 345.9L525.7 346.1L524.3 346.2L523.1 346.3L521.9 346.5L520.8 346.7L519.9 346.8L519 347L518.3 347.2L517.7 347.4L517.1 347.6L516.7 347.8L516.4 348L516.3 348.2L516.2 348.4Z" fill="url(#topg)"/>
<path d="M502.5 352.4L502.6 352.1L502.8 351.7L503.2 351.4L503.7 351.1L504.4 350.8L505.2 350.5L506.2 350.2L507.3 349.9L508.5 349.6L509.9 349.4L511.4 349.1L513 348.9L514.8 348.7L516.7 348.4L518.7 348.3" fill="none" stroke="#0a0a0a" stroke-width="1.3" stroke-linejoin="round"/>
<path d="M606.7 354.4L608.9 355.1L610.9 355.7L612.8 356.4L614.5 357L616.1 357.7L617.5 358.4L618.8 359.1L619.9 359.9L620.8 360.6L621.6 361.3L622.2 362.1L622.6 362.8L622.8 363.6L622.9 364.3L622.8 365.1L609.1 361L609.2 360.3L609.1 359.7L609 359.1L608.6 358.4L608.2 357.8L607.6 357.2L606.9 356.6L606 356L605 355.4L603.9 354.8L602.7 354.2L601.4 353.6L599.9 353.1L598.4 352.6L596.7 352Z" fill="url(#topg)"/>
<path d="M606.7 354.4L608.9 355.1L610.9 355.7L612.8 356.4L614.5 357L616.1 357.7L617.5 358.4L618.8 359.1L619.9 359.9L620.8 360.6L621.6 361.3L622.2 362.1L622.6 362.8L622.8 363.6L622.9 364.3L622.8 365.1" fill="none" stroke="#0a0a0a" stroke-width="1.3" stroke-linejoin="round"/>
<rect x="516.2" y="113.9" width="93" height="261.1" fill="url(#coreg)" stroke="#0a0a0a" stroke-width="1.3" stroke-linejoin="round"/>
<path d="M622.9 127.2L622.6 128.7L621.6 130.2L620 131.6L617.7 133L614.8 134.3L611.4 135.6L607.4 136.9L603 138L598.1 139.1L592.8 140.1L587.2 140.9L581.3 141.7L575.2 142.4L569 143L562.7 143.4L556.4 143.7L550.2 144L544.1 144.1L538.2 144.1L532.6 144L527.3 143.8L522.4 143.5L518 143.2L514 142.7L510.6 142.2L507.7 141.7L505.4 141.1L503.8 140.4L502.8 139.8L502.5 139.1L516.2 135.1L516.5 135.5L517.2 136L518.5 136.4L520.2 136.7L522.4 137.1L525.1 137.4L528.1 137.6L531.6 137.8L535.4 137.9L539.5 138L543.8 138L548.3 137.9L553 137.7L557.8 137.4L562.7 137.1L567.6 136.6L572.4 136.1L577.1 135.5L581.6 134.8L586 134L590 133.2L593.8 132.3L597.3 131.3L600.3 130.3L603 129.2L605.2 128L606.9 126.9L608.2 125.7L608.9 124.5L609.2 123.2Z" fill="url(#topg)"/>
<path d="M609.2 123.2L608.9 124.5L608.2 125.7L606.9 126.9L605.2 128L603 129.2L600.3 130.3L597.3 131.3L593.8 132.3L590 133.2L586 134L581.6 134.8L577.1 135.5L572.4 136.1L567.6 136.6L562.7 137.1L557.8 137.4L553 137.7L548.3 137.9L543.8 138L539.5 138L535.4 137.9L531.6 137.8L528.1 137.6L525.1 137.4L522.4 137.1L520.2 136.7L518.5 136.4L517.2 136L516.5 135.5L516.2 135.1" fill="none" stroke="#0a0a0a" stroke-width="1.3" stroke-linejoin="round"/>
<path d="M622.9 150.9L622.6 152.4L621.6 153.9L620 155.3L617.7 156.7L614.8 158L611.4 159.3L607.4 160.6L603 161.7L598.1 162.8L592.8 163.8L587.2 164.6L581.3 165.4L575.2 166.1L569 166.7L562.7 167.1L556.4 167.4L550.2 167.7L544.1 167.8L538.2 167.8L532.6 167.7L527.3 167.5L522.4 167.2L518 166.9L514 166.4L510.6 165.9L507.7 165.4L505.4 164.8L503.8 164.1L502.8 163.5L502.5 162.8L516.2 158.8L516.5 159.2L517.2 159.7L518.5 160.1L520.2 160.4L522.4 160.8L525.1 161.1L528.1 161.3L531.6 161.5L535.4 161.6L539.5 161.7L543.8 161.7L548.3 161.6L553 161.4L557.8 161.1L562.7 160.8L567.6 160.3L572.4 159.8L577.1 159.2L581.6 158.5L586 157.7L590 156.9L593.8 156L597.3 155L600.3 154L603 152.9L605.2 151.7L606.9 150.6L608.2 149.4L608.9 148.2L609.2 146.9Z" fill="url(#topg)"/>
<path d="M609.2 146.9L608.9 148.2L608.2 149.4L606.9 150.6L605.2 151.7L603 152.9L600.3 154L597.3 155L593.8 156L590 156.9L586 157.7L581.6 158.5L577.1 159.2L572.4 159.8L567.6 160.3L562.7 160.8L557.8 161.1L553 161.4L548.3 161.6L543.8 161.7L539.5 161.7L535.4 161.6L531.6 161.5L528.1 161.3L525.1 161.1L522.4 160.8L520.2 160.4L518.5 160.1L517.2 159.7L516.5 159.2L516.2 158.8" fill="none" stroke="#0a0a0a" stroke-width="1.3" stroke-linejoin="round"/>
<path d="M622.9 174.7L622.6 176.1L621.6 177.6L620 179L617.7 180.4L614.8 181.7L611.4 183L607.4 184.3L603 185.4L598.1 186.5L592.8 187.5L587.2 188.3L581.3 189.1L575.2 189.8L569 190.4L562.7 190.8L556.4 191.1L550.2 191.4L544.1 191.5L538.2 191.5L532.6 191.4L527.3 191.2L522.4 190.9L518 190.6L514 190.1L510.6 189.6L507.7 189.1L505.4 188.5L503.8 187.8L502.8 187.2L502.5 186.5L516.2 182.5L516.5 182.9L517.2 183.4L518.5 183.8L520.2 184.1L522.4 184.5L525.1 184.8L528.1 185L531.6 185.2L535.4 185.3L539.5 185.4L543.8 185.4L548.3 185.3L553 185.1L557.8 184.8L562.7 184.5L567.6 184L572.4 183.5L577.1 182.9L581.6 182.2L586 181.4L590 180.6L593.8 179.7L597.3 178.7L600.3 177.7L603 176.6L605.2 175.4L606.9 174.3L608.2 173.1L608.9 171.9L609.2 170.7Z" fill="url(#topg)"/>
<path d="M609.2 170.7L608.9 171.9L608.2 173.1L606.9 174.3L605.2 175.4L603 176.6L600.3 177.7L597.3 178.7L593.8 179.7L590 180.6L586 181.4L581.6 182.2L577.1 182.9L572.4 183.5L567.6 184L562.7 184.5L557.8 184.8L553 185.1L548.3 185.3L543.8 185.4L539.5 185.4L535.4 185.3L531.6 185.2L528.1 185L525.1 184.8L522.4 184.5L520.2 184.1L518.5 183.8L517.2 183.4L516.5 182.9L516.2 182.5" fill="none" stroke="#0a0a0a" stroke-width="1.3" stroke-linejoin="round"/>
<path d="M622.9 198.3L622.6 199.8L621.6 201.3L620 202.7L617.7 204.1L614.8 205.4L611.4 206.7L607.4 208L603 209.1L598.1 210.2L592.8 211.2L587.2 212L581.3 212.8L575.2 213.5L569 214.1L562.7 214.5L556.4 214.8L550.2 215.1L544.1 215.2L538.2 215.2L532.6 215.1L527.3 214.9L522.4 214.6L518 214.3L514 213.8L510.6 213.3L507.7 212.8L505.4 212.2L503.8 211.5L502.8 210.9L502.5 210.2L516.2 206.2L516.5 206.6L517.2 207.1L518.5 207.5L520.2 207.8L522.4 208.2L525.1 208.5L528.1 208.7L531.6 208.9L535.4 209L539.5 209.1L543.8 209.1L548.3 209L553 208.8L557.8 208.5L562.7 208.2L567.6 207.7L572.4 207.2L577.1 206.6L581.6 205.9L586 205.1L590 204.3L593.8 203.4L597.3 202.4L600.3 201.4L603 200.3L605.2 199.1L606.9 198L608.2 196.8L608.9 195.6L609.2 194.3Z" fill="url(#topg)"/>
<path d="M609.2 194.3L608.9 195.6L608.2 196.8L606.9 198L605.2 199.1L603 200.3L600.3 201.4L597.3 202.4L593.8 203.4L590 204.3L586 205.1L581.6 205.9L577.1 206.6L572.4 207.2L567.6 207.7L562.7 208.2L557.8 208.5L553 208.8L548.3 209L543.8 209.1L539.5 209.1L535.4 209L531.6 208.9L528.1 208.7L525.1 208.5L522.4 208.2L520.2 207.8L518.5 207.5L517.2 207.1L516.5 206.6L516.2 206.2" fill="none" stroke="#0a0a0a" stroke-width="1.3" stroke-linejoin="round"/>
<path d="M622.9 222.1L622.6 223.5L621.6 225L620 226.4L617.7 227.8L614.8 229.1L611.4 230.4L607.4 231.7L603 232.8L598.1 233.9L592.8 234.9L587.2 235.7L581.3 236.5L575.2 237.2L569 237.8L562.7 238.2L556.4 238.5L550.2 238.8L544.1 238.9L538.2 238.9L532.6 238.8L527.3 238.6L522.4 238.3L518 238L514 237.5L510.6 237L507.7 236.5L505.4 235.9L503.8 235.2L502.8 234.6L502.5 233.9L516.2 229.9L516.5 230.3L517.2 230.8L518.5 231.2L520.2 231.5L522.4 231.9L525.1 232.2L528.1 232.4L531.6 232.6L535.4 232.7L539.5 232.8L543.8 232.8L548.3 232.7L553 232.5L557.8 232.2L562.7 231.9L567.6 231.4L572.4 230.9L577.1 230.3L581.6 229.6L586 228.8L590 228L593.8 227.1L597.3 226.1L600.3 225.1L603 224L605.2 222.8L606.9 221.7L608.2 220.5L608.9 219.3L609.2 218.1Z" fill="url(#topg)"/>
<path d="M609.2 218.1L608.9 219.3L608.2 220.5L606.9 221.7L605.2 222.8L603 224L600.3 225.1L597.3 226.1L593.8 227.1L590 228L586 228.8L581.6 229.6L577.1 230.3L572.4 230.9L567.6 231.4L562.7 231.9L557.8 232.2L553 232.5L548.3 232.7L543.8 232.8L539.5 232.8L535.4 232.7L531.6 232.6L528.1 232.4L525.1 232.2L522.4 231.9L520.2 231.5L518.5 231.2L517.2 230.8L516.5 230.3L516.2 229.9" fill="none" stroke="#0a0a0a" stroke-width="1.3" stroke-linejoin="round"/>
<path d="M622.9 245.7L622.6 247.2L621.6 248.7L620 250.1L617.7 251.5L614.8 252.8L611.4 254.1L607.4 255.4L603 256.5L598.1 257.6L592.8 258.6L587.2 259.4L581.3 260.2L575.2 260.9L569 261.5L562.7 261.9L556.4 262.2L550.2 262.5L544.1 262.6L538.2 262.6L532.6 262.5L527.3 262.3L522.4 262L518 261.7L514 261.2L510.6 260.7L507.7 260.2L505.4 259.6L503.8 258.9L502.8 258.3L502.5 257.6L516.2 253.6L516.5 254L517.2 254.5L518.5 254.9L520.2 255.2L522.4 255.6L525.1 255.9L528.1 256.1L531.6 256.3L535.4 256.4L539.4 256.5L543.8 256.5L548.3 256.4L553 256.2L557.8 255.9L562.7 255.6L567.6 255.1L572.4 254.6L577.1 254L581.6 253.3L586 252.5L590 251.7L593.8 250.8L597.3 249.8L600.3 248.8L603 247.7L605.2 246.5L606.9 245.4L608.2 244.2L608.9 243L609.2 241.7Z" fill="url(#topg)"/>
<path d="M609.2 241.7L608.9 243L608.2 244.2L606.9 245.4L605.2 246.5L603 247.7L600.3 248.8L597.3 249.8L593.8 250.8L590 251.7L586 252.5L581.6 253.3L577.1 254L572.4 254.6L567.6 255.1L562.7 255.6L557.8 255.9L553 256.2L548.3 256.4L543.8 256.5L539.4 256.5L535.4 256.4L531.6 256.3L528.1 256.1L525.1 255.9L522.4 255.6L520.2 255.2L518.5 254.9L517.2 254.5L516.5 254L516.2 253.6" fill="none" stroke="#0a0a0a" stroke-width="1.3" stroke-linejoin="round"/>
<path d="M622.9 269.5L622.6 270.9L621.6 272.4L620 273.8L617.7 275.2L614.8 276.5L611.4 277.8L607.4 279.1L603 280.2L598.1 281.3L592.8 282.3L587.2 283.1L581.3 283.9L575.2 284.6L569 285.2L562.7 285.6L556.4 285.9L550.2 286.2L544.1 286.3L538.2 286.3L532.6 286.2L527.3 286L522.4 285.7L518 285.4L514 284.9L510.6 284.4L507.7 283.9L505.4 283.3L503.8 282.6L502.8 282L502.5 281.3L516.2 277.3L516.5 277.7L517.2 278.2L518.5 278.6L520.2 278.9L522.4 279.3L525.1 279.6L528.1 279.8L531.6 280L535.4 280.1L539.5 280.2L543.8 280.2L548.3 280.1L553 279.9L557.8 279.6L562.7 279.3L567.6 278.8L572.4 278.3L577.1 277.7L581.6 277L586 276.2L590 275.4L593.8 274.5L597.3 273.5L600.3 272.5L603 271.4L605.2 270.2L606.9 269.1L608.2 267.9L608.9 266.7L609.2 265.5Z" fill="url(#topg)"/>
<path d="M609.2 265.5L608.9 266.7L608.2 267.9L606.9 269.1L605.2 270.2L603 271.4L600.3 272.5L597.3 273.5L593.8 274.5L590 275.4L586 276.2L581.6 277L577.1 277.7L572.4 278.3L567.6 278.8L562.7 279.3L557.8 279.6L553 279.9L548.3 280.1L543.8 280.2L539.5 280.2L535.4 280.1L531.6 280L528.1 279.8L525.1 279.6L522.4 279.3L520.2 278.9L518.5 278.6L517.2 278.2L516.5 277.7L516.2 277.3" fill="none" stroke="#0a0a0a" stroke-width="1.3" stroke-linejoin="round"/>
<path d="M622.9 293.1L622.6 294.6L621.6 296.1L620 297.5L617.7 298.9L614.8 300.2L611.4 301.5L607.4 302.8L603 303.9L598.1 305L592.8 306L587.2 306.8L581.3 307.6L575.2 308.3L569 308.9L562.7 309.3L556.4 309.6L550.2 309.9L544.1 310L538.2 310L532.6 309.9L527.3 309.7L522.4 309.4L518 309.1L514 308.6L510.6 308.1L507.7 307.6L505.4 307L503.8 306.3L502.8 305.7L502.5 305L516.2 301L516.5 301.4L517.2 301.9L518.5 302.3L520.2 302.6L522.4 303L525.1 303.3L528.1 303.5L531.6 303.7L535.4 303.8L539.4 303.9L543.8 303.9L548.3 303.8L553 303.6L557.8 303.3L562.7 303L567.6 302.5L572.4 302L577.1 301.4L581.6 300.7L586 299.9L590 299.1L593.8 298.2L597.3 297.2L600.3 296.2L603 295.1L605.2 293.9L606.9 292.8L608.2 291.6L608.9 290.4L609.2 289.1Z" fill="url(#topg)"/>
<path d="M609.2 289.1L608.9 290.4L608.2 291.6L606.9 292.8L605.2 293.9L603 295.1L600.3 296.2L597.3 297.2L593.8 298.2L590 299.1L586 299.9L581.6 300.7L577.1 301.4L572.4 302L567.6 302.5L562.7 303L557.8 303.3L553 303.6L548.3 303.8L543.8 303.9L539.4 303.9L535.4 303.8L531.6 303.7L528.1 303.5L525.1 303.3L522.4 303L520.2 302.6L518.5 302.3L517.2 301.9L516.5 301.4L516.2 301" fill="none" stroke="#0a0a0a" stroke-width="1.3" stroke-linejoin="round"/>
<path d="M622.9 316.9L622.6 318.3L621.6 319.8L620 321.2L617.7 322.6L614.8 323.9L611.4 325.2L607.4 326.5L603 327.6L598.1 328.7L592.8 329.7L587.2 330.5L581.3 331.3L575.2 332L569 332.6L562.7 333L556.4 333.3L550.2 333.6L544.1 333.7L538.2 333.7L532.6 333.6L527.3 333.4L522.4 333.1L518 332.8L514 332.3L510.6 331.8L507.7 331.3L505.4 330.7L503.8 330L502.8 329.4L502.5 328.7L516.2 324.7L516.5 325.1L517.2 325.6L518.5 326L520.2 326.3L522.4 326.7L525.1 327L528.1 327.2L531.6 327.4L535.4 327.5L539.5 327.6L543.8 327.6L548.3 327.5L553 327.3L557.8 327L562.7 326.7L567.6 326.2L572.4 325.7L577.1 325.1L581.6 324.4L586 323.6L590 322.8L593.8 321.9L597.3 320.9L600.3 319.9L603 318.8L605.2 317.6L606.9 316.5L608.2 315.3L608.9 314.1L609.2 312.9Z" fill="url(#topg)"/>
<path d="M609.2 312.9L608.9 314.1L608.2 315.3L606.9 316.5L605.2 317.6L603 318.8L600.3 319.9L597.3 320.9L593.8 321.9L590 322.8L586 323.6L581.6 324.4L577.1 325.1L572.4 325.7L567.6 326.2L562.7 326.7L557.8 327L553 327.3L548.3 327.5L543.8 327.6L539.5 327.6L535.4 327.5L531.6 327.4L528.1 327.2L525.1 327L522.4 326.7L520.2 326.3L518.5 326L517.2 325.6L516.5 325.1L516.2 324.7" fill="none" stroke="#0a0a0a" stroke-width="1.3" stroke-linejoin="round"/>
<path d="M622.9 340.5L622.6 342L621.6 343.5L620 344.9L617.7 346.3L614.8 347.6L611.4 348.9L607.4 350.2L603 351.3L598.1 352.4L592.8 353.4L587.2 354.2L581.3 355L575.2 355.7L569 356.3L562.7 356.7L556.4 357L550.2 357.3L544.1 357.4L538.2 357.4L532.6 357.3L527.3 357.1L522.4 356.8L518 356.5L514 356L510.6 355.5L507.7 355L505.4 354.4L503.8 353.7L502.8 353.1L502.5 352.4L516.2 348.4L516.5 348.8L517.2 349.3L518.5 349.7L520.2 350L522.4 350.4L525.1 350.7L528.1 350.9L531.6 351.1L535.4 351.2L539.5 351.3L543.8 351.3L548.3 351.2L553 351L557.8 350.7L562.7 350.4L567.6 349.9L572.4 349.4L577.1 348.8L581.6 348.1L586 347.3L590 346.5L593.8 345.6L597.3 344.6L600.3 343.6L603 342.5L605.2 341.3L606.9 340.2L608.2 339L608.9 337.8L609.2 336.5Z" fill="url(#topg)"/>
<path d="M609.2 336.5L608.9 337.8L608.2 339L606.9 340.2L605.2 341.3L603 342.5L600.3 343.6L597.3 344.6L593.8 345.6L590 346.5L586 347.3L581.6 348.1L577.1 348.8L572.4 349.4L567.6 349.9L562.7 350.4L557.8 350.7L553 351L548.3 351.2L543.8 351.3L539.5 351.3L535.4 351.2L531.6 351.1L528.1 350.9L525.1 350.7L522.4 350.4L520.2 350L518.5 349.7L517.2 349.3L516.5 348.8L516.2 348.4" fill="none" stroke="#0a0a0a" stroke-width="1.3" stroke-linejoin="round"/>
<path d="M622.9 364.2L622.6 365.6L621.8 366.9L620.5 368.2L618.6 369.5L616.2 370.7L613.4 371.9L610.1 373.1L606.3 374.2L602.2 375.2L597.7 376.2L592.9 377L587.8 377.8L582.5 378.6L577.1 379.2L571.4 379.8L565.8 380.2L560 380.6L554.3 380.8L548.7 381L543.2 381.1L537.9 381.1L532.8 381L528 380.9L523.5 380.6L519.3 380.3L515.6 379.9L512.2 379.5L509.3 379L506.9 378.5L505 377.9L518.2 373.3L519.6 373.6L521.5 373.9L523.7 374.2L526.3 374.5L529.2 374.7L532.4 374.8L535.9 375L539.6 375L543.6 375L547.7 374.9L551.9 374.7L556.2 374.5L560.6 374.2L565.1 373.9L569.5 373.4L573.8 372.9L578 372.4L582.1 371.7L586 371L589.7 370.3L593.2 369.4L596.4 368.6L599.3 367.6L601.8 366.7L604.1 365.7L605.9 364.6L607.3 363.5L608.4 362.5L609 361.4L609.2 360.2Z" fill="url(#topg)"/>
<path d="M609.2 360.2L609 361.4L608.4 362.5L607.3 363.5L605.9 364.6L604.1 365.7L601.8 366.7L599.3 367.6L596.4 368.6L593.2 369.4L589.7 370.3L586 371L582.1 371.7L578 372.4L573.8 372.9L569.5 373.4L565.1 373.9L560.6 374.2L556.2 374.5L551.9 374.7L547.7 374.9L543.6 375L539.6 375L535.9 375L532.4 374.8L529.2 374.7L526.3 374.5L523.7 374.2L521.5 373.9L519.6 373.6L518.2 373.3" fill="none" stroke="#0a0a0a" stroke-width="1.3" stroke-linejoin="round"/>
<path d="M622.9 113.9L622.6 115L621.6 116L620 117.1L617.7 118.1L614.8 119L611.4 119.9L607.4 120.7L603 121.5L598.1 122.2L592.8 122.8L587.2 123.2L581.3 123.6L575.2 123.9L569 124.1L562.7 124.1L556.4 124.1L550.2 123.9L544.1 123.6L538.2 123.2L532.6 122.8L527.3 122.2L522.4 121.5L518 120.7L514 119.9L510.6 119L507.7 118.1L505.4 117.1L503.8 116L502.8 115L502.5 113.9L502.5 124.4L502.8 125.1L503.8 125.7L505.4 126.4L507.7 127L510.6 127.5L514 128L518 128.5L522.4 128.8L527.3 129.1L532.6 129.3L538.2 129.4L544.1 129.4L550.2 129.3L556.4 129L562.7 128.7L569 128.3L575.2 127.7L581.3 127L587.2 126.6L592.8 126.2L598.1 125.6L603 124.9L607.4 124.1L611.4 123.3L614.8 122.4L617.7 121.5L620 120.5L621.6 119.4L622.6 118.4L622.9 117.3Z" fill="url(#bandg)" stroke="#0a0a0a" stroke-width="1.3" stroke-linejoin="round"/>
<path d="M622.9 127.2L622.6 128.7L621.6 130.2L620 131.6L617.7 133L614.8 134.3L611.4 135.6L607.4 136.9L603 138L598.1 139.1L592.8 140.1L587.2 140.9L581.3 141.7L575.2 142.4L569 143L562.7 143.4L556.4 143.7L550.2 144L544.1 144.1L538.2 144.1L532.6 144L527.3 143.8L522.4 143.5L518 143.2L514 142.7L510.6 142.2L507.7 141.7L505.4 141.1L503.8 140.4L502.8 139.8L502.5 139.1L502.5 148.1L502.8 148.8L503.8 149.4L505.4 150.1L507.7 150.7L510.6 151.2L514 151.7L518 152.2L522.4 152.5L527.3 152.8L532.6 153L538.2 153.1L544.1 153.1L550.2 153L556.4 152.7L562.7 152.4L569 152L575.2 151.4L581.3 150.7L587.2 149.9L592.8 149.1L598.1 148.1L603 147L607.4 145.9L611.4 144.6L614.8 143.3L617.7 142L620 140.6L621.6 139.2L622.6 137.7L622.9 136.2Z" fill="url(#bandg)" stroke="#0a0a0a" stroke-width="1.3" stroke-linejoin="round"/>
<path d="M622.9 150.9L622.6 152.4L621.6 153.9L620 155.3L617.7 156.7L614.8 158L611.4 159.3L607.4 160.6L603 161.7L598.1 162.8L592.8 163.8L587.2 164.6L581.3 165.4L575.2 166.1L569 166.7L562.7 167.1L556.4 167.4L550.2 167.7L544.1 167.8L538.2 167.8L532.6 167.7L527.3 167.5L522.4 167.2L518 166.9L514 166.4L510.6 165.9L507.7 165.4L505.4 164.8L503.8 164.1L502.8 163.5L502.5 162.8L502.5 171.8L502.8 172.5L503.8 173.1L505.4 173.8L507.7 174.4L510.6 174.9L514 175.4L518 175.9L522.4 176.2L527.3 176.5L532.6 176.7L538.2 176.8L544.1 176.8L550.2 176.7L556.4 176.4L562.7 176.1L569 175.7L575.2 175.1L581.3 174.4L587.2 173.6L592.8 172.8L598.1 171.8L603 170.7L607.4 169.6L611.4 168.3L614.8 167L617.7 165.7L620 164.3L621.6 162.9L622.6 161.4L622.9 159.9Z" fill="url(#bandg)" stroke="#0a0a0a" stroke-width="1.3" stroke-linejoin="round"/>
<path d="M622.9 174.7L622.6 176.1L621.6 177.6L620 179L617.7 180.4L614.8 181.7L611.4 183L607.4 184.3L603 185.4L598.1 186.5L592.8 187.5L587.2 188.3L581.3 189.1L575.2 189.8L569 190.4L562.7 190.8L556.4 191.1L550.2 191.4L544.1 191.5L538.2 191.5L532.6 191.4L527.3 191.2L522.4 190.9L518 190.6L514 190.1L510.6 189.6L507.7 189.1L505.4 188.5L503.8 187.8L502.8 187.2L502.5 186.5L502.5 195.5L502.8 196.2L503.8 196.8L505.4 197.5L507.7 198.1L510.6 198.6L514 199.1L518 199.6L522.4 199.9L527.3 200.2L532.6 200.4L538.2 200.5L544.1 200.5L550.2 200.4L556.4 200.1L562.7 199.8L569 199.4L575.2 198.8L581.3 198.1L587.2 197.3L592.8 196.5L598.1 195.5L603 194.4L607.4 193.3L611.4 192L614.8 190.7L617.7 189.4L620 188L621.6 186.6L622.6 185.1L622.9 183.7Z" fill="url(#bandg)" stroke="#0a0a0a" stroke-width="1.3" stroke-linejoin="round"/>
<path d="M622.9 198.3L622.6 199.8L621.6 201.3L620 202.7L617.7 204.1L614.8 205.4L611.4 206.7L607.4 208L603 209.1L598.1 210.2L592.8 211.2L587.2 212L581.3 212.8L575.2 213.5L569 214.1L562.7 214.5L556.4 214.8L550.2 215.1L544.1 215.2L538.2 215.2L532.6 215.1L527.3 214.9L522.4 214.6L518 214.3L514 213.8L510.6 213.3L507.7 212.8L505.4 212.2L503.8 211.5L502.8 210.9L502.5 210.2L502.5 219.2L502.8 219.9L503.8 220.5L505.4 221.2L507.7 221.8L510.6 222.3L514 222.8L518 223.3L522.4 223.6L527.3 223.9L532.6 224.1L538.2 224.2L544.1 224.2L550.2 224.1L556.4 223.8L562.7 223.5L569 223.1L575.2 222.5L581.3 221.8L587.2 221L592.8 220.2L598.1 219.2L603 218.1L607.4 217L611.4 215.7L614.8 214.4L617.7 213.1L620 211.7L621.6 210.3L622.6 208.8L622.9 207.3Z" fill="url(#bandg)" stroke="#0a0a0a" stroke-width="1.3" stroke-linejoin="round"/>
<path d="M622.9 222.1L622.6 223.5L621.6 225L620 226.4L617.7 227.8L614.8 229.1L611.4 230.4L607.4 231.7L603 232.8L598.1 233.9L592.8 234.9L587.2 235.7L581.3 236.5L575.2 237.2L569 237.8L562.7 238.2L556.4 238.5L550.2 238.8L544.1 238.9L538.2 238.9L532.6 238.8L527.3 238.6L522.4 238.3L518 238L514 237.5L510.6 237L507.7 236.5L505.4 235.9L503.8 235.2L502.8 234.6L502.5 233.9L502.5 242.9L502.8 243.6L503.8 244.2L505.4 244.9L507.7 245.5L510.6 246L514 246.5L518 247L522.4 247.3L527.3 247.6L532.6 247.8L538.2 247.9L544.1 247.9L550.2 247.8L556.4 247.5L562.7 247.2L569 246.8L575.2 246.2L581.3 245.5L587.2 244.7L592.8 243.9L598.1 242.9L603 241.8L607.4 240.7L611.4 239.4L614.8 238.1L617.7 236.8L620 235.4L621.6 234L622.6 232.5L622.9 231.1Z" fill="url(#bandg)" stroke="#0a0a0a" stroke-width="1.3" stroke-linejoin="round"/>
<path d="M622.9 245.7L622.6 247.2L621.6 248.7L620 250.1L617.7 251.5L614.8 252.8L611.4 254.1L607.4 255.4L603 256.5L598.1 257.6L592.8 258.6L587.2 259.4L581.3 260.2L575.2 260.9L569 261.5L562.7 261.9L556.4 262.2L550.2 262.5L544.1 262.6L538.2 262.6L532.6 262.5L527.3 262.3L522.4 262L518 261.7L514 261.2L510.6 260.7L507.7 260.2L505.4 259.6L503.8 258.9L502.8 258.3L502.5 257.6L502.5 266.6L502.8 267.3L503.8 267.9L505.4 268.6L507.7 269.2L510.6 269.7L514 270.2L518 270.7L522.4 271L527.3 271.3L532.6 271.5L538.2 271.6L544.1 271.6L550.2 271.5L556.4 271.2L562.7 270.9L569 270.5L575.2 269.9L581.3 269.2L587.2 268.4L592.8 267.6L598.1 266.6L603 265.5L607.4 264.4L611.4 263.1L614.8 261.8L617.7 260.5L620 259.1L621.6 257.7L622.6 256.2L622.9 254.7Z" fill="url(#bandg)" stroke="#0a0a0a" stroke-width="1.3" stroke-linejoin="round"/>
<path d="M622.9 269.5L622.6 270.9L621.6 272.4L620 273.8L617.7 275.2L614.8 276.5L611.4 277.8L607.4 279.1L603 280.2L598.1 281.3L592.8 282.3L587.2 283.1L581.3 283.9L575.2 284.6L569 285.2L562.7 285.6L556.4 285.9L550.2 286.2L544.1 286.3L538.2 286.3L532.6 286.2L527.3 286L522.4 285.7L518 285.4L514 284.9L510.6 284.4L507.7 283.9L505.4 283.3L503.8 282.6L502.8 282L502.5 281.3L502.5 290.3L502.8 291L503.8 291.6L505.4 292.3L507.7 292.9L510.6 293.4L514 293.9L518 294.4L522.4 294.7L527.3 295L532.6 295.2L538.2 295.3L544.1 295.3L550.2 295.2L556.4 294.9L562.7 294.6L569 294.2L575.2 293.6L581.3 292.9L587.2 292.1L592.8 291.3L598.1 290.3L603 289.2L607.4 288.1L611.4 286.8L614.8 285.5L617.7 284.2L620 282.8L621.6 281.4L622.6 279.9L622.9 278.5Z" fill="url(#bandg)" stroke="#0a0a0a" stroke-width="1.3" stroke-linejoin="round"/>
<path d="M622.9 293.1L622.6 294.6L621.6 296.1L620 297.5L617.7 298.9L614.8 300.2L611.4 301.5L607.4 302.8L603 303.9L598.1 305L592.8 306L587.2 306.8L581.3 307.6L575.2 308.3L569 308.9L562.7 309.3L556.4 309.6L550.2 309.9L544.1 310L538.2 310L532.6 309.9L527.3 309.7L522.4 309.4L518 309.1L514 308.6L510.6 308.1L507.7 307.6L505.4 307L503.8 306.3L502.8 305.7L502.5 305L502.5 314L502.8 314.7L503.8 315.3L505.4 316L507.7 316.6L510.6 317.1L514 317.6L518 318.1L522.4 318.4L527.3 318.7L532.6 318.9L538.2 319L544.1 319L550.2 318.9L556.4 318.6L562.7 318.3L569 317.9L575.2 317.3L581.3 316.6L587.2 315.8L592.8 315L598.1 314L603 312.9L607.4 311.8L611.4 310.5L614.8 309.2L617.7 307.9L620 306.5L621.6 305.1L622.6 303.6L622.9 302.1Z" fill="url(#bandg)" stroke="#0a0a0a" stroke-width="1.3" stroke-linejoin="round"/>
<path d="M622.9 316.9L622.6 318.3L621.6 319.8L620 321.2L617.7 322.6L614.8 323.9L611.4 325.2L607.4 326.5L603 327.6L598.1 328.7L592.8 329.7L587.2 330.5L581.3 331.3L575.2 332L569 332.6L562.7 333L556.4 333.3L550.2 333.6L544.1 333.7L538.2 333.7L532.6 333.6L527.3 333.4L522.4 333.1L518 332.8L514 332.3L510.6 331.8L507.7 331.3L505.4 330.7L503.8 330L502.8 329.4L502.5 328.7L502.5 337.7L502.8 338.4L503.8 339L505.4 339.7L507.7 340.3L510.6 340.8L514 341.3L518 341.8L522.4 342.1L527.3 342.4L532.6 342.6L538.2 342.7L544.1 342.7L550.2 342.6L556.4 342.3L562.7 342L569 341.6L575.2 341L581.3 340.3L587.2 339.5L592.8 338.7L598.1 337.7L603 336.6L607.4 335.5L611.4 334.2L614.8 332.9L617.7 331.6L620 330.2L621.6 328.8L622.6 327.3L622.9 325.9Z" fill="url(#bandg)" stroke="#0a0a0a" stroke-width="1.3" stroke-linejoin="round"/>
<path d="M622.9 340.5L622.6 342L621.6 343.5L620 344.9L617.7 346.3L614.8 347.6L611.4 348.9L607.4 350.2L603 351.3L598.1 352.4L592.8 353.4L587.2 354.2L581.3 355L575.2 355.7L569 356.3L562.7 356.7L556.4 357L550.2 357.3L544.1 357.4L538.2 357.4L532.6 357.3L527.3 357.1L522.4 356.8L518 356.5L514 356L510.6 355.5L507.7 355L505.4 354.4L503.8 353.7L502.8 353.1L502.5 352.4L502.5 361.4L502.8 362.1L503.8 362.7L505.4 363.4L507.7 364L510.6 364.5L514 365L518 365.5L522.4 365.8L527.3 366.1L532.6 366.3L538.2 366.4L544.1 366.4L550.2 366.3L556.4 366L562.7 365.7L569 365.3L575.2 364.7L581.3 364L587.2 363.2L592.8 362.4L598.1 361.4L603 360.3L607.4 359.2L611.4 357.9L614.8 356.6L617.7 355.3L620 353.9L621.6 352.5L622.6 351L622.9 349.5Z" fill="url(#bandg)" stroke="#0a0a0a" stroke-width="1.3" stroke-linejoin="round"/>
<path d="M622.9 364.2L622.6 365.6L621.8 366.9L620.5 368.2L618.6 369.5L616.2 370.7L613.4 371.9L610.1 373.1L606.3 374.2L602.2 375.2L597.7 376.2L592.9 377L587.8 377.8L582.5 378.6L577.1 379.2L571.4 379.8L565.8 380.2L560 380.6L554.3 380.8L548.7 381L543.2 381.1L537.9 381.1L532.8 381L528 380.9L523.5 380.6L519.3 380.3L515.6 379.9L512.2 379.5L509.3 379L506.9 378.5L505 377.9L505 377.9L506.9 378.9L509.3 379.7L512.2 380.6L515.6 381.4L519.3 382.1L523.5 382.8L528 383.4L532.8 383.9L537.9 384.3L543.2 384.7L548.7 385L554.3 385.1L560 385.2L565.8 385.2L571.4 385.1L577.1 384.9L582.5 384.7L587.8 384.3L592.9 383.9L597.7 383.3L602.2 382.7L606.3 382.1L610.1 381.3L613.4 380.5L616.2 379.7L618.6 378.5L620.5 377.2L621.8 375.9L622.6 374.6L622.9 373.2Z" fill="url(#bandg)" stroke="#0a0a0a" stroke-width="1.3" stroke-linejoin="round"/>
<ellipse cx="562.7" cy="113.9" rx="60.2" ry="10.23" fill="#a9a9a1" stroke="#0a0a0a" stroke-width="1.3" stroke-linejoin="round"/>
<ellipse cx="562.7" cy="114.5" rx="40" ry="6.8" fill="url(#holeg)" stroke="#0a0a0a" stroke-width="1.3" stroke-linejoin="round"/>
</g>
</g>
</svg>
<svg id="ui" width="870" height="614" viewBox="0 0 870 614">
<rect x="0" y="0" width="870" height="44.6" fill="#f5f5f5"/>
<path d="M5.1 -2 V27 Q5.1 31 1.2 31 H-3" fill="none" stroke="#d6d6d6" stroke-width="1.3"/>
<rect x="277.25" y="0" width="1.3" height="37" fill="#d6d6d6"/>
<rect x="546.25" y="0" width="1.3" height="37" fill="#d6d6d6"/>
<rect x="655.35" y="0" width="1.3" height="37" fill="#d6d6d6"/>
<rect x="759.65" y="0" width="1.3" height="37" fill="#d6d6d6"/>
<g transform="translate(118.4 35.7) scale(0.8 1)"><text x="0" y="0" font-size="12" textLength="46.4" lengthAdjust="spacing" fill="#454545">CREAR</text></g>
<path d="M158.29999999999998 29.4 h5.6 l-2.8 3.5 z" fill="#757575"/>
<g transform="translate(376.2 35.7) scale(0.8 1)"><text x="0" y="0" font-size="12" textLength="78.9" lengthAdjust="spacing" fill="#454545">MODIFICAR</text></g>
<path d="M442.5 29.4 h5.6 l-2.8 3.5 z" fill="#757575"/>
<g transform="translate(561.8 35.7) scale(0.8 1)"><text x="0" y="0" font-size="12" textLength="91.8" lengthAdjust="spacing" fill="#454545">CONFIGURAR</text></g>
<path d="M639.1 29.4 h5.6 l-2.8 3.5 z" fill="#757575"/>
<g transform="translate(670.8 35.7) scale(0.8 1)"><text x="0" y="0" font-size="12" textLength="80.4" lengthAdjust="spacing" fill="#454545">CONSTRUIR</text></g>
<path d="M739.4000000000001 29.4 h5.6 l-2.8 3.5 z" fill="#757575"/>
<g transform="translate(774.8 35.7) scale(0.8 1)"><text x="0" y="0" font-size="12" textLength="106.6" lengthAdjust="spacing" fill="#454545">INSPECCIONAR</text></g>
<path d="M863.1 29.4 h5.6 l-2.8 3.5 z" fill="#757575"/>
<path d="M22.5 -2 V13.2" stroke="#5a5a5a" stroke-width="1.1" fill="none"/>
<path d="M24.8 15.35 H38.7" stroke="#5a5a5a" stroke-width="1.1" fill="none"/>
<path d="M49.7 -2 V4.6" stroke="#6c6c6c" stroke-width="1" stroke-dasharray="3 1.4" fill="none"/>
<rect x="21" y="13.9" width="3" height="3" fill="#4c4c4c"/>
<rect x="28.1" y="7" width="3" height="3" fill="#4c4c4c"/>
<path d="M29.55 -2 V6.8 M32 8.6 Q38.6 7.2 41.6 1.6" stroke="#5a5a5a" stroke-width="1.1" fill="none"/>
<path d="M43.9 5.1 h3.8 v5.1 h5.1 v3.8 h-5.1 v5.1 h-3.8 v-5.1 h-5.1 v-3.8 h5.1 z" fill="#33a852"/>
<path d="M65 -1 H84 V13.8 H65 Z" fill="#5ea6e2"/>
<path d="M84 -1 H88.3 V10 L84 13.8 Z" fill="#3f86c8"/>
<path d="M65 14.4 H84 V18.4 H65 Z" fill="#c9c9c9"/>
<path d="M84 14.4 L88.3 10.6 V14.4 L84 18.4 Z" fill="#9e9e9e"/>
<rect x="91.9" y="-1" width="1.3" height="14" fill="#2e2e2e"/>
<path d="M107.4 -1 V7.6 Q109.6 13.6 117.6 15.4 Q124.6 11.2 132.8 14.8 L139 9 V-1 Z" fill="#5ea6e2"/>
<path d="M107.4 -1 V1.2 Q113 6 119.4 5.2 Q126 2.6 133 4.6 L139 -1 Z" fill="#93c8f1"/>
<path d="M107.4 7.6 Q109.6 13.6 117.6 15.4 V7.4 Q111 6 107.4 1.2 Z" fill="#3f86c8"/>
<path d="M133.8 4.6 L138.9 -0.2 V9.6 L133.8 14.6 Z" fill="#fbfbfb" stroke="#4a4a4a" stroke-width="1"/>
<path d="M150.6 -1 H175 V18.6 H150.6 Z" fill="#d8d8d8" stroke="#6c6c6c" stroke-width="1"/>
<path d="M175 -1 H181.6 V12.2 L175 18.6 Z" fill="#adadad" stroke="#6c6c6c" stroke-width="1"/>
<clipPath id="holec"><circle cx="162.2" cy="6.4" r="7.6"/></clipPath>
<circle cx="162.2" cy="6.4" r="8.6" fill="#ececec" stroke="#777" stroke-width="1.1"/>
<circle cx="162.2" cy="6.4" r="7.4" fill="#58a2e0"/>
<circle cx="167.2" cy="2.6" r="5.4" fill="#f4f4f4" clip-path="url(#holec)"/>
<path d="M196.4 -1 V10.4 M199.8 13.5 H214.2" stroke="#666" stroke-width="1" fill="none"/>
<rect x="193.4" y="10.3" width="6.2" height="6.2" fill="#6ab0ea" stroke="#3f86c8" stroke-width="0.7"/>
<rect x="214.4" y="10.3" width="6.2" height="6.2" fill="#6ab0ea" stroke="#3f86c8" stroke-width="0.7"/>
<path d="M236.8 -2 V10 Q236.8 14.2 241 14.2 H256.4 V-2 Z" fill="#b48ae2" stroke="#9a9a9a" stroke-width="1"/>
<path d="M246.6 -1 V13.6 M237.4 5.7 H256" stroke="#6a48b0" stroke-width="0.9" stroke-dasharray="1.8 1.2" fill="none"/>
<rect x="245.9" y="5" width="1.4" height="1.4" fill="#d0405a"/>
<rect x="258.6" y="-1" width="5.2" height="7.6" fill="#6a2a90"/>
<path d="M250.8 1.2 h18.4 v19 h-18.4 z" fill="none"/>
<path d="M258.05 3.2 h4.1 v5.65 h5.65 v4.1 h-5.65 v5.65 h-4.1 v-5.65 h-5.65 v-4.1 h5.65 z" fill="#33a852"/>
<path d="M291 -1 H296.6 V18.5 H291 Z" fill="#dcdcdc"/>
<path d="M291.2 -1 V18.4 H297" stroke="#7a7a7a" stroke-width="1" fill="none"/>
<path d="M298.2 -1 H307.4 V18.7 H298.2 Z" fill="#5ea6e2"/>
<path d="M307.4 -1 H312.8 V13.4 L307.4 18.7 Z" fill="#3f86c8"/>
<rect x="310.4" y="-1" width="3" height="4.8" fill="#f5f5f5"/>
<path d="M311 2.4 H317" stroke="#222" stroke-width="1.3" fill="none"/><path d="M316.2 -0.4 L320.4 2.4 L316.2 5.2 Z" fill="#222"/>
<path d="M333.4 -1 H351 Q357.5 0.5 358.6 7.4 V18 H333.4 Z" fill="#d6d6d6"/>
<path d="M351 -1 Q357.5 0.5 358.6 7.4 L364.8 1.6 V-1 Z" fill="#5ea6e2"/>
<path d="M358.6 7.4 L364.8 1.6 V12 L358.6 18 Z" fill="#a8a8a8"/>
<path d="M333.4 -1 V18 H358.6" stroke="#8a8a8a" stroke-width="0.9" fill="none"/>
<path d="M376.3 -1 H401.6 V18 H376.3 Z" fill="#dcdcdc" stroke="#7c7c7c" stroke-width="1"/>
<path d="M401.6 -1 H407.4 V12.6 L401.6 18 Z" fill="#a8a8a8" stroke="#7c7c7c" stroke-width="0.9"/>
<path d="M380 -1 H397.6 V14.4 H380 Z" fill="#fdfdfd"/>
<path d="M380 -1 H388 V7.6 L380 14.4 Z" fill="#3f86c8"/>
<path d="M388 7.6 H397.6 V14.4 H380 Z" fill="#8cc3ef"/>
<path d="M419.2 -1 H450.9 V5.2 L447.2 8.8 H437.4 V18.7 H419.2 Z" fill="#5ea6e2"/>
<path d="M437.4 8.8 H441.4 V14.8 L437.4 18.7 Z" fill="#3f86c8"/>
<path d="M437.4 7.6 H446.6 L450.9 3.6 V5.2 L447.2 8.8 H437.4 Z" fill="#4a92d4"/>
<path d="M464.3 7.5 H486.7 V17.3 H464.3 Z" fill="#dcdcdc"/>
<path d="M486.7 7.5 L492 3 V12.6 L486.7 17.3 Z" fill="#b2b2b2"/>
<path d="M464.3 7.5 V17.3 H486.7 L492 12.6" stroke="#6e6e6e" stroke-width="1" fill="none"/>
<path d="M464.3 -1 H492.6 L488.4 2.6 H464.3 Z" fill="#5ea6e2"/>
<path d="M462.2 5.2 H486.8 L492.4 0.4" stroke="#3f8fe0" stroke-width="1.1" fill="none"/>
<path d="M521.1 -2 V12 M511 3 H531" stroke="#2a2a2a" stroke-width="2.1" fill="none"/>
<path d="M515.5 11.2 H526.7 L521.1 18.7 Z M506.2 3 L512.9 -1.6 V7.6 Z M536.4 3 L529.7 -1.6 V7.6 Z" fill="#2a2a2a"/>
<path d="M565 -1 H586.6 V14.4 H565 Z" fill="#d4d4d4" stroke="#8c8c8c" stroke-width="0.9"/>
<path d="M586.6 -1 H592.6 V5.6 H586.6 Z" fill="#a9a9a9"/>
<path d="M583.4 10.200000000000001 h13.6 M583.4 15.4 h13.6" stroke="#4c4c4c" stroke-width="1.9" fill="none"/><rect x="586.3" y="7.2" width="1.7" height="6" fill="#2f80d0"/><rect x="592.6999999999999" y="12.7" width="1.8" height="6" fill="#4c4c4c"/>
<path d="M608.5 -1 V15.4 H625" stroke="#6a6a6a" stroke-width="1.1" fill="none"/>
<path d="M611.8 -1 V11.2 H625 M616.7 -1 V11.2 M621.6 -1 V11.2 M611.8 1.2 H637 M611.8 6 H634.4 M634.4 -1 V6 M637 -1 V7 M626.4 1.2 V6" stroke="#666" stroke-width="1.1" fill="none"/>
<path d="M626.9 10.200000000000001 h13.6 M626.9 15.4 h13.6" stroke="#4c4c4c" stroke-width="1.9" fill="none"/><rect x="629.8" y="7.2" width="1.7" height="6" fill="#2f80d0"/><rect x="636.1999999999999" y="12.7" width="1.8" height="6" fill="#4c4c4c"/>
<path d="M694.2 -1 H702.4 V17.6 H694.2 Z" fill="#d6d6d6" stroke="#8a8a8a" stroke-width="0.9"/>
<path d="M702.8 -1 H712.4 V9 L702.8 17.6 Z" fill="#3db85a" stroke="#2e8a44" stroke-width="0.8"/>
<path d="M704.4 1 V13.4 M706.6 0 V11.4 M708.8 -1 V9.4 M710.6 -1 V7.8" stroke="#8ee0a0" stroke-width="0.8" stroke-dasharray="1 1" fill="none"/>
<path d="M715.3 -1 H724 V9.4 L715.3 17.6 Z" fill="#e0975a" stroke="#b87840" stroke-width="0.8"/>
<rect x="787.2" y="5.8" width="28" height="4.6" fill="#f5a00a"/>
<path d="M790 5.8 v2.4 M793 5.8 v1.6 M796 5.8 v2.4 M799 5.8 v1.6 M802 5.8 v2.4 M805 5.8 v1.6 M808 5.8 v2.4 M811 5.8 v1.6" stroke="#fbe0a0" stroke-width="0.8" fill="none"/>
<path d="M787.7 -1 V3.4 M814.7 -1 V3.4" stroke="#555" stroke-width="1" fill="none"/><path d="M788.4 0.6 l2.6 -1.6 v3.2 z M814 0.6 l-2.6 -1.6 v3.2 z" fill="#555"/>
<path d="M845 -1 H856.4 V12.6 H845 M845 2.4 H856.4" stroke="#9a9a9a" stroke-width="1.1" fill="none"/>
<rect x="834.4" y="-1" width="9.8" height="13.6" fill="#93c6ef"/>
<rect x="834.4" y="-1" width="9.8" height="3.4" fill="#6aaee8"/>
<path d="M830.6 9.6 V16 H844.3 V12.8" stroke="#4a90d0" stroke-width="1" fill="none"/>
<rect x="-2" y="49.4" width="189.5" height="23.8" fill="#f4f4f4" stroke="#dcdcdc" stroke-width="1"/>
<rect x="167" y="60.2" width="7.8" height="1.5" fill="#5a5a5a"/>
<rect x="0" y="79.2" width="66.7" height="19.6" fill="#d6d6d6"/>
<rect x="66.7" y="79.2" width="25.299999999999997" height="19.6" fill="#f5f5f5"/>
<circle cx="77.5" cy="89.3" r="5.7" fill="none" stroke="#3a3a3a" stroke-width="1.2"/>
<circle cx="77.5" cy="89.3" r="2.5" fill="#3a3a3a"/>
<g transform="translate(57.0 93.8) scale(0.9 1)"><text x="0" y="0" font-size="13" text-anchor="end" font-weight="bold" fill="#333">(Sin guardar)</text></g>
<rect x="0" y="103.2" width="151.7" height="19.6" fill="#f5f5f5" fill-opacity="0.97"/>
<g transform="translate(141.4 117.8) scale(0.985 1)"><text x="0" y="0" font-size="13" text-anchor="end" fill="#3d3d3d">Configuración del documento</text></g>
<rect x="0" y="127.2" width="97.7" height="19.6" fill="#f5f5f5" fill-opacity="0.97"/>
<g transform="translate(87.0 141.8) scale(0.965 1)"><text x="0" y="0" font-size="13" text-anchor="end" fill="#3d3d3d">Unidades: mm, g</text></g>
<rect x="0" y="151.2" width="97.7" height="19.6" fill="#f5f5f5" fill-opacity="0.97"/>
<g transform="translate(87.7 165.79999999999998) scale(0.96 1)"><text x="0" y="0" font-size="13" text-anchor="end" fill="#3d3d3d">Diseño de piezas</text></g>
<rect x="0" y="175.2" width="89.7" height="19.6" fill="#f5f5f5" fill-opacity="0.97"/>
<g transform="translate(80.6 189.79999999999998) scale(0.995 1)"><text x="0" y="0" font-size="13" text-anchor="end" fill="#3d3d3d">Roscas: Ficticia</text></g>
<rect x="0" y="199.2" width="83.6" height="19.6" fill="#f5f5f5" fill-opacity="0.97"/>
<g transform="translate(72.4 213.79999999999998) scale(0.962 1)"><text x="0" y="0" font-size="13" text-anchor="end" fill="#3d3d3d">Vistas guardadas</text></g>
<rect x="0" y="223.2" width="48.9" height="19.6" fill="#f5f5f5" fill-opacity="0.97"/>
<text x="0.7" y="237.79999999999998" font-size="13" textLength="36.8" lengthAdjust="spacingAndGlyphs" fill="#3d3d3d">Origen</text>
<rect x="0" y="247.2" width="57.0" height="19.6" fill="#f5f5f5" fill-opacity="0.97"/>
<text x="0.7" y="261.8" font-size="13" textLength="44.9" lengthAdjust="spacingAndGlyphs" fill="#3d3d3d">Análisis</text>
<rect x="0" y="271.2" width="57.0" height="19.6" fill="#f5f5f5" fill-opacity="0.97"/>
<text x="0.7" y="285.8" font-size="13" textLength="44.9" lengthAdjust="spacingAndGlyphs" fill="#3d3d3d">Cuerpos</text>
<rect x="0" y="295.2" width="74.3" height="19.6" fill="#f5f5f5" fill-opacity="0.97"/>
<text x="18.6" y="309.8" font-size="13" textLength="44.9" lengthAdjust="spacingAndGlyphs" fill="#3d3d3d">Cuerpo1</text>
<path d="M-1 299.8 h2.2 q1.2 0 1.2 1.2 v7.6 q0 1.2 -1.2 1.2 h-2.2" fill="#fafafa" stroke="#6a6a6a" stroke-width="1"/>
<rect x="0" y="319.2" width="74.3" height="19.6" fill="#f5f5f5" fill-opacity="0.97"/>
<text x="18.6" y="333.8" font-size="13" textLength="44.9" lengthAdjust="spacingAndGlyphs" fill="#3d3d3d">Cuerpo2</text>
<path d="M-1 323.8 h2.2 q1.2 0 1.2 1.2 v7.6 q0 1.2 -1.2 1.2 h-2.2" fill="#fafafa" stroke="#6a6a6a" stroke-width="1"/>
<rect x="0" y="343.2" width="57.0" height="19.6" fill="#f5f5f5" fill-opacity="0.97"/>
<text x="0.7" y="357.8" font-size="13" textLength="44.9" lengthAdjust="spacingAndGlyphs" fill="#3d3d3d">Bocetos</text>
<rect x="0" y="367.2" width="84.0" height="19.6" fill="#f5f5f5" fill-opacity="0.97"/>
<text x="0.7" y="381.8" font-size="13" textLength="73.3" lengthAdjust="spacingAndGlyphs" fill="#3d3d3d">Construcción</text>
<rect x="-2" y="546.3" width="189.5" height="23.6" fill="#f4f4f4" stroke="#e0e0e0" stroke-width="1"/>
<path d="M167.3 557.7 h7.4 M171 554 v7.4" stroke="#666" stroke-width="1.6" fill="none"/>
<rect x="0" y="575.1" width="870" height="40" fill="#f5f5f5"/>
<defs><linearGradient id="rsh" x1="0" y1="0" x2="1" y2="0"><stop offset="0" stop-color="#000" stop-opacity="0"/><stop offset="1" stop-color="#000" stop-opacity="0.15"/></linearGradient></defs>
<rect x="864.5" y="253" width="4.5" height="361" fill="url(#rsh)"/>
<rect x="868.6" y="253" width="1" height="361" fill="#adadad"/>
<rect x="869.5" y="253" width="0.5" height="361" fill="#e8e8e8"/>
<rect x="447.6" y="545" width="239" height="20.6" fill="#f6f6f6" fill-opacity="0.97"/>
<path d="M459 548.2 v16.6" stroke="#6ab4f0" stroke-width="1.5" stroke-dasharray="4.6 1.4" fill="none"/>
<path d="M465.2 553.6 A7.4 3 0 1 0 466.4 555.6" fill="none" stroke="#3c3c3c" stroke-width="1.4"/>
<path d="M463.2 552.2 l3.6 0.6 l-1.8 2.8 z" fill="#3c3c3c"/>
<path d="M473.2 554.8 h5.6 l-2.8 3.5 z" fill="#5e5e5e"/>
<path d="M486.6 553.4 l4 -4.4 l1.6 2.6 l4.6 -1.6 l3.6 3.4 z" fill="#6e6e6e"/>
<rect x="486.8" y="553.6" width="13.8" height="10" fill="#f2f2f2" stroke="#555" stroke-width="1.2"/>
<rect x="488.6" y="555.8" width="10.2" height="6" fill="#5ea6e2"/>
<path d="M517.7 564.8 L512.8 559.9 L511.2 557.6 Q511.4 556 512.9 556.5 L516.6 559.6 L515.5 551.7 Q516 549.4 517.2 549.8 Q518.2 550 518.2 551 L519 556.3 L519.3 549.6 Q520.4 547.6 521.5 549.6 L521.7 556.3 L523.2 550.2 Q524.2 548.4 525.2 550.3 L524.1 556.9 L526.3 553.2 Q527.6 551.6 528.3 553.7 L525.9 559.9 Q525 562.6 523.9 564.8 Z" fill="#fbfbfb" stroke="#7a7a7a" stroke-width="0.95" stroke-linejoin="round"/>
<circle cx="542.5" cy="555.8" r="4.6" fill="#dadada" stroke="#5c5c5c" stroke-width="1.4"/>
<path d="M546 559.6 l4 4.4" stroke="#5c5c5c" stroke-width="2.1" fill="none"/>
<path d="M549.4 550.3 h4.2 M551.5 548.2 v4.2 M549.4 554.7 h4.2" stroke="#4a4a4a" stroke-width="1.1" fill="none"/>
<rect x="563.4" y="548.2" width="16.2" height="16.4" fill="none" stroke="#444" stroke-width="1.1" stroke-dasharray="2.4 1.6"/>
<circle cx="570.6" cy="555.4" r="6" fill="#d6d6d6" stroke="#5c5c5c" stroke-width="1.4"/>
<path d="M575 559.8 l4 4" stroke="#5c5c5c" stroke-width="2" fill="none"/>
<path d="M585.1 554.8 h5.6 l-2.8 3.5 z" fill="#5e5e5e"/>
<rect x="598.2" y="550.4" width="14.6" height="10" fill="#b4b4b4" stroke="#555" stroke-width="1.4"/>
<path d="M602 563.6 h7 M605.5 561 v2.4" stroke="#555" stroke-width="1.4" fill="none"/>
<path d="M615.9 554.8 h5.6 l-2.8 3.5 z" fill="#5e5e5e"/>
<path d="M628.6 548.8 h13.2 v13.2 h-13.2 z M633 548.8 v13.2 M637.4 548.8 v13.2 M628.6 553.2 h13.2 M628.6 557.6 h13.2" fill="#fbfbfb" stroke="#4f4f4f" stroke-width="1.1"/>
<path d="M647.0 554.8 h5.6 l-2.8 3.5 z" fill="#5e5e5e"/>
<rect x="659.6" y="549.6" width="15.2" height="13" fill="#fbfbfb" stroke="#555" stroke-width="1.2"/>
<rect x="661.5" y="551.5" width="4.6" height="3.6" fill="#d2d2d2" stroke="#8a8a8a" stroke-width="0.6"/>
<rect x="661.5" y="557.1" width="4.6" height="3.6" fill="#d2d2d2" stroke="#8a8a8a" stroke-width="0.6"/>
<rect x="668.2" y="551.5" width="4.6" height="3.6" fill="#d2d2d2" stroke="#8a8a8a" stroke-width="0.6"/>
<rect x="668.2" y="557.1" width="4.6" height="3.6" fill="#d2d2d2" stroke="#8a8a8a" stroke-width="0.6"/>
<path d="M678.1 554.8 h5.6 l-2.8 3.5 z" fill="#5e5e5e"/>
<path d="M-1 596.8 L3.1 599.8 L-1 602.8 z" fill="#7a7a7a"/><rect x="4" y="594.2" width="1.8" height="11.4" fill="#555"/>
<rect x="38.3" y="610" width="1.3" height="4" fill="#b4b4b4"/>
<path d="M32.5 592.5 H42.3 M30.7 594.3 V603.7 M44.1 594.3 V599.5 M32.5 605.5 H37.3" stroke="#5a5a5a" stroke-width="1.1" fill="none"/><rect x="29.6" y="591.4" width="2.2" height="2.2" fill="#2f86e0"/><rect x="43.0" y="591.4" width="2.2" height="2.2" fill="#2f86e0"/><rect x="29.6" y="604.4" width="2.2" height="2.2" fill="#2f86e0"/><path d="M38.3 606.5 l0.9 -2.6 l5.2 -4.8 l1.8 1.9 l-5.2 4.8 z" fill="#f5a623"/><path d="M38.3 606.5 l0.9 -2.6 l1.8 1.9 z" fill="#5a5048"/><path d="M43.1 600.3 l1.3 -1.2 l1.8 1.9 l-1.3 1.2 z" fill="#e8707a"/>
<rect x="62.3" y="610" width="1.3" height="4" fill="#b4b4b4"/>
<path d="M54.1 604.8 h8.4 l2.8 -2 v1.4 l-2.8 2.2 h-8.4 z" fill="#c9c9c9"/><path d="M54.1 594.0 h8.4 v10.6 h-8.4 z" fill="#5ea6e2"/><path d="M54.1 594.0 l2.8 -2.6 h8.4 l-2.8 2.6 z" fill="#a5d2f4"/><path d="M62.5 594.0 l2.8 -2.6 v10.4 l-2.8 2.8 z" fill="#3f86c8"/><path d="M68.8 593.2 v11.2" stroke="#222" stroke-width="1.05" fill="none"/><path d="M67.1 595.0 l1.7 -3.4 l1.7 3.4 z" fill="#222"/>
<rect x="86.3" y="610" width="1.3" height="4" fill="#b4b4b4"/>
<path d="M80.5 592.5 H90.3 M78.7 594.3 V603.7 M92.1 594.3 V599.5 M80.5 605.5 H85.3" stroke="#5a5a5a" stroke-width="1.1" fill="none"/><rect x="77.6" y="591.4" width="2.2" height="2.2" fill="#2f86e0"/><rect x="91.0" y="591.4" width="2.2" height="2.2" fill="#2f86e0"/><rect x="77.6" y="604.4" width="2.2" height="2.2" fill="#2f86e0"/><path d="M86.3 606.5 l0.9 -2.6 l5.2 -4.8 l1.8 1.9 l-5.2 4.8 z" fill="#f5a623"/><path d="M86.3 606.5 l0.9 -2.6 l1.8 1.9 z" fill="#5a5048"/><path d="M91.1 600.3 l1.3 -1.2 l1.8 1.9 l-1.3 1.2 z" fill="#e8707a"/>
<rect x="110.1" y="610" width="1.3" height="4" fill="#b4b4b4"/>
<path d="M101.9 604.8 h8.4 l2.8 -2 v1.4 l-2.8 2.2 h-8.4 z" fill="#c9c9c9"/><path d="M101.9 594.0 h8.4 v10.6 h-8.4 z" fill="#5ea6e2"/><path d="M101.9 594.0 l2.8 -2.6 h8.4 l-2.8 2.6 z" fill="#a5d2f4"/><path d="M110.3 594.0 l2.8 -2.6 v10.4 l-2.8 2.8 z" fill="#3f86c8"/><path d="M116.6 593.2 v11.2" stroke="#222" stroke-width="1.05" fill="none"/><path d="M114.9 595.0 l1.7 -3.4 l1.7 3.4 z" fill="#222"/>
<rect x="134.1" y="610" width="1.3" height="4" fill="#b4b4b4"/>
<path d="M125.9 604.8 h8.4 l2.8 -2 v1.4 l-2.8 2.2 h-8.4 z" fill="#c9c9c9"/><path d="M125.9 594.0 h8.4 v10.6 h-8.4 z" fill="#5ea6e2"/><path d="M125.9 594.0 l2.8 -2.6 h8.4 l-2.8 2.6 z" fill="#a5d2f4"/><path d="M134.3 594.0 l2.8 -2.6 v10.4 l-2.8 2.8 z" fill="#3f86c8"/><path d="M140.6 593.2 v11.2" stroke="#222" stroke-width="1.05" fill="none"/><path d="M138.9 595.0 l1.7 -3.4 l1.7 3.4 z" fill="#222"/>
<rect x="158.3" y="610" width="1.3" height="4" fill="#b4b4b4"/>
<path d="M152.5 592.5 H162.3 M150.7 594.3 V603.7 M164.1 594.3 V599.5 M152.5 605.5 H157.3" stroke="#5a5a5a" stroke-width="1.1" fill="none"/><rect x="149.6" y="591.4" width="2.2" height="2.2" fill="#2f86e0"/><rect x="163.0" y="591.4" width="2.2" height="2.2" fill="#2f86e0"/><rect x="149.6" y="604.4" width="2.2" height="2.2" fill="#2f86e0"/><path d="M158.3 606.5 l0.9 -2.6 l5.2 -4.8 l1.8 1.9 l-5.2 4.8 z" fill="#f5a623"/><path d="M158.3 606.5 l0.9 -2.6 l1.8 1.9 z" fill="#5a5048"/><path d="M163.1 600.3 l1.3 -1.2 l1.8 1.9 l-1.3 1.2 z" fill="#e8707a"/>
<rect x="182.3" y="610" width="1.3" height="4" fill="#b4b4b4"/>
<path d="M174.1 604.8 h8.4 l2.8 -2 v1.4 l-2.8 2.2 h-8.4 z" fill="#c9c9c9"/><path d="M174.1 594.0 h8.4 v10.6 h-8.4 z" fill="#5ea6e2"/><path d="M174.1 594.0 l2.8 -2.6 h8.4 l-2.8 2.6 z" fill="#a5d2f4"/><path d="M182.5 594.0 l2.8 -2.6 v10.4 l-2.8 2.8 z" fill="#3f86c8"/><path d="M188.8 593.2 v11.2" stroke="#222" stroke-width="1.05" fill="none"/><path d="M187.1 595.0 l1.7 -3.4 l1.7 3.4 z" fill="#222"/>
<rect x="206.3" y="610" width="1.3" height="4" fill="#b4b4b4"/>
<path d="M201.5 594.6 v-2.6 h10.4 v2.6 M201.5 603.4 v2.6 h10.4 v-2.6" stroke="#5a5a5a" stroke-width="1" fill="none"/><path d="M199.3 597.0 l14.6 -2.7" stroke="#4a9ce4" stroke-width="1.55" fill="none"/><path d="M199.3 600.1 l14.6 -2.7" stroke="#4a9ce4" stroke-width="1.55" fill="none"/><path d="M199.3 603.2 l14.6 -2.7" stroke="#4a9ce4" stroke-width="1.55" fill="none"/>
<rect x="230.3" y="610" width="1.3" height="4" fill="#b4b4b4"/>
<path d="M225.5 594.6 v-2.6 h10.4 v2.6 M225.5 603.4 v2.6 h10.4 v-2.6" stroke="#5a5a5a" stroke-width="1" fill="none"/><path d="M223.3 597.0 l14.6 -2.7" stroke="#4a9ce4" stroke-width="1.55" fill="none"/><path d="M223.3 600.1 l14.6 -2.7" stroke="#4a9ce4" stroke-width="1.55" fill="none"/><path d="M223.3 603.2 l14.6 -2.7" stroke="#4a9ce4" stroke-width="1.55" fill="none"/>
<rect x="254.8" y="610" width="1.3" height="4" fill="#b4b4b4"/>
<path d="M246.4 595.6 q0 -2.6 2.6 -3 l2.4 -0.4 v12 l-5 1 z" fill="#e2e2e2" stroke="#6a6a6a" stroke-width="0.9"/>
<path d="M251.4 593.4 l5 -2.4 v11.4 l-5 3.6 z" fill="#35b257" stroke="#2a8a42" stroke-width="0.6"/>
<rect x="252.9" y="597.4" width="2" height="3.4" fill="#e8f6ea" stroke="#2a8a42" stroke-width="0.4"/>
<path d="M257.4 594.0 l4.6 -3.2 v10.4 l-4.6 4.4 z" fill="#e39a5e" stroke="#b87840" stroke-width="0.6"/>
<rect x="278.8" y="610" width="1.3" height="4" fill="#b4b4b4"/>
<path d="M272.4 593.6 l11.2 -2.2 v2.6 l-7 2.6 l7 -0.8 v2.6 l-7 2.6 l7 -0.8 v2.6 l-11.2 3.4 v-2.8 l6.6 -2.6 l-6.6 0.8 v-2.8 l6.6 -2.6 l-6.6 0.8 z" fill="#3f93dc"/>
<rect x="302.4" y="610" width="1.3" height="4" fill="#b4b4b4"/>
<path d="M301.7 591.6 l-7.4 13.6 h7.4 z" fill="#fafafa" stroke="#7a7a7a" stroke-width="0.9"/>
<path d="M302.0 591.4 l7.4 13.8 h-7.4 z" fill="#5ea6e2"/>
<rect x="326.4" y="610" width="1.3" height="4" fill="#b4b4b4"/>
<circle cx="325.6" cy="593.4" r="1.75" fill="#5aa8ea"/>
<circle cx="329.3" cy="594.9" r="1.75" fill="#5aa8ea"/>
<circle cx="330.8" cy="598.6" r="1.75" fill="#5aa8ea"/>
<circle cx="329.3" cy="602.3" r="1.75" fill="#5aa8ea"/>
<circle cx="325.6" cy="603.8" r="1.75" fill="#5aa8ea"/>
<circle cx="321.9" cy="602.3" r="1.75" fill="#5aa8ea"/>
<circle cx="320.4" cy="598.6" r="1.75" fill="#5aa8ea"/>
<circle cx="321.9" cy="594.9" r="1.3" fill="#fff" stroke="#888" stroke-width="0.6"/>
<rect x="350.4" y="610" width="1.3" height="4" fill="#b4b4b4"/>
<path d="M349.6 593.1 v11 M344.1 598.6 h11" stroke="#2c2c2c" stroke-width="1.5" fill="none"/>
<path d="M349.6 591.0 l2.7 3.3 h-5.4 z M349.6 606.2 l2.7 -3.3 h-5.4 z M342.0 598.6 l3.3 2.7 v-5.4 z M357.2 598.6 l-3.3 2.7 v-5.4 z" fill="#2c2c2c"/>
<path d="M356.3 586.6 q0 -1.2 1.2 -1.2 h9.2 q1.2 0 1.2 1.2 v1.6 l-4.5 6.4 v20 h-2.6 v-20 l-4.5 -6.4 z" fill="#2a2a2a"/>
</svg></div>
</body></html>
